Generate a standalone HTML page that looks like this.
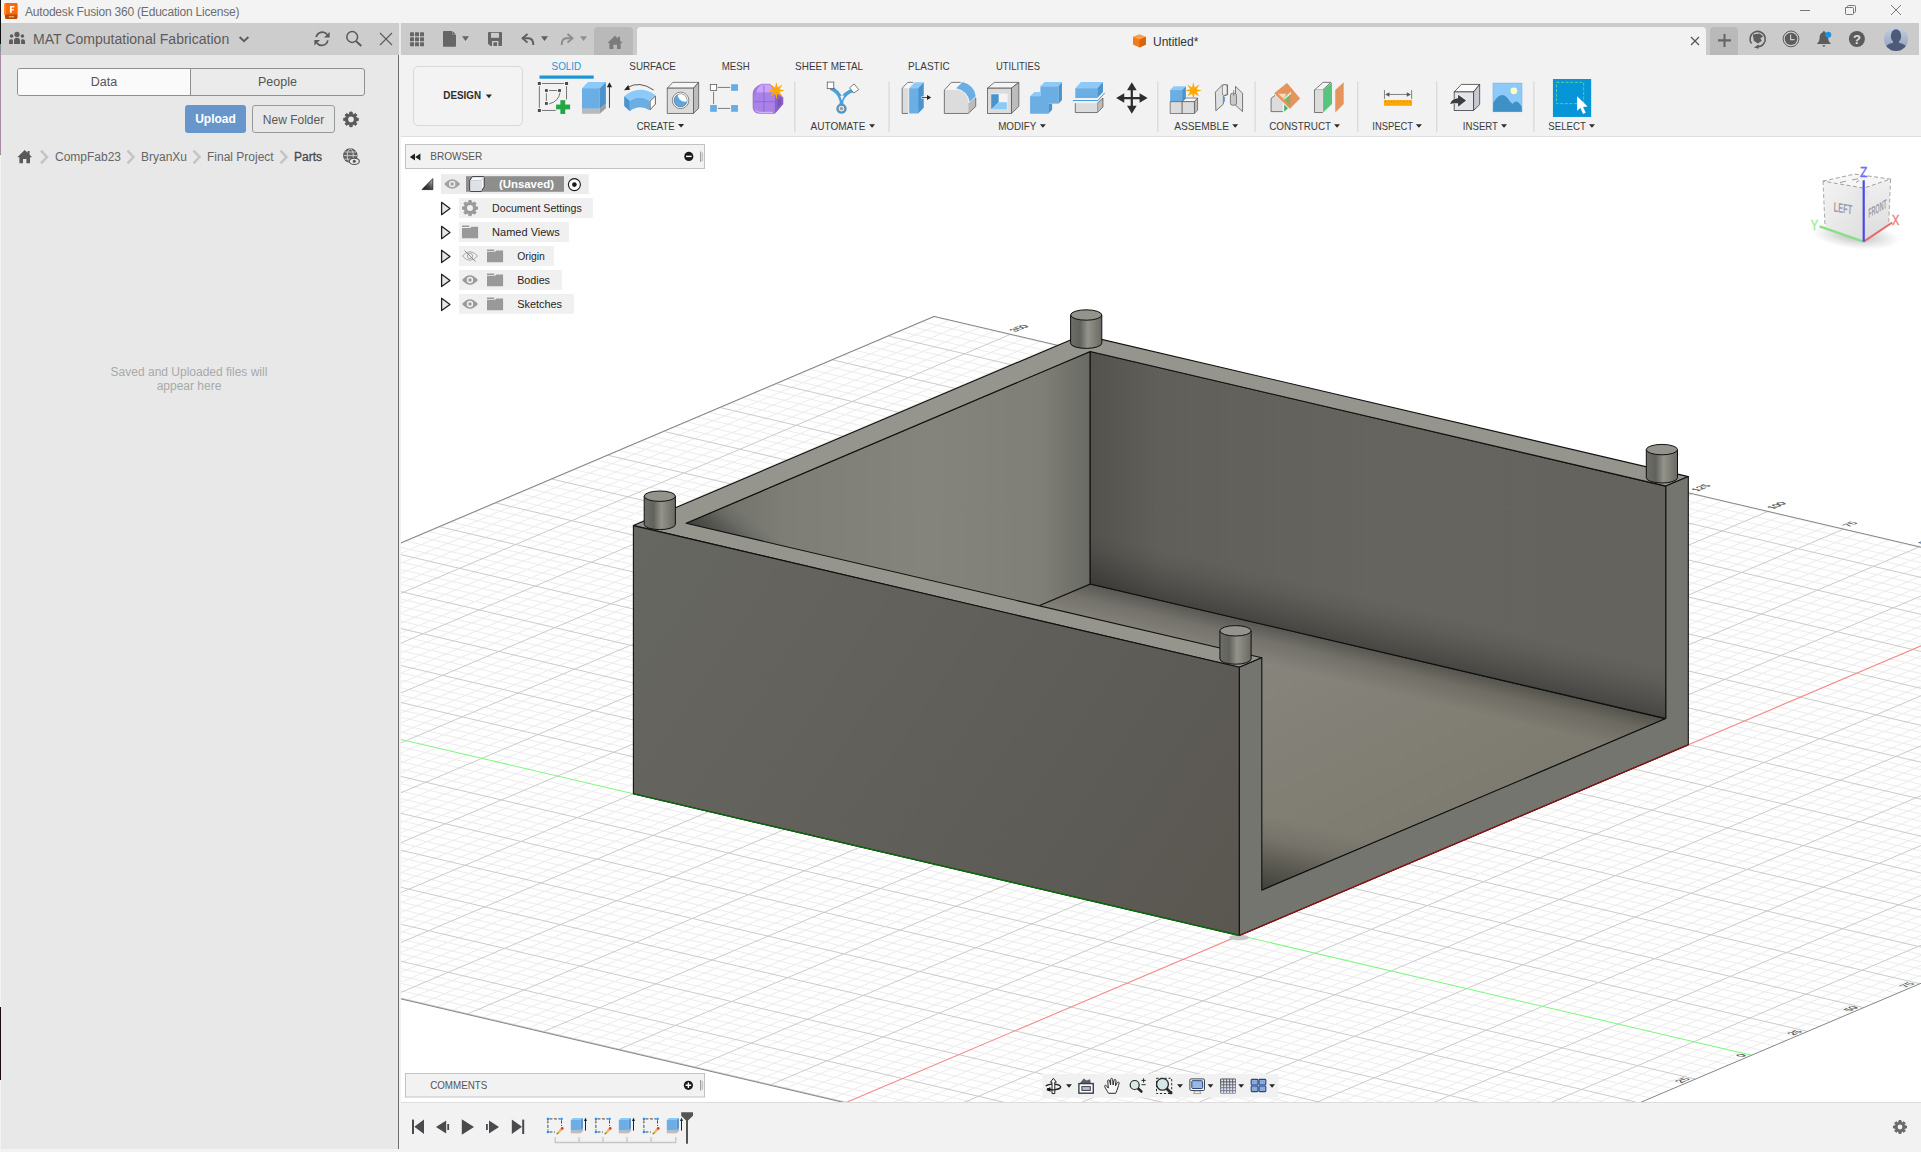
<!DOCTYPE html>
<html><head><meta charset="utf-8"><title>Autodesk Fusion 360</title>
<style>
*{box-sizing:border-box;margin:0;padding:0}
html,body{width:1921px;height:1152px;overflow:hidden;background:#f2f2f2;font-family:"Liberation Sans",sans-serif;}
.abs{position:absolute}
#titlebar{position:absolute;left:0;top:0;width:1921px;height:23px;background:#f3f3f3}
#titlebar .t{position:absolute;left:25px;top:5px;font-size:12px;color:#6e6e6e;white-space:nowrap;letter-spacing:-0.2px}
#lphead{position:absolute;left:1px;top:23px;width:397.7px;height:32px;background:#cdcdcd}
#lphead .t{position:absolute;left:32px;top:8px;font-size:14.05px;color:#5c5c5c;white-space:nowrap}
#lp{position:absolute;left:1px;top:55px;width:397px;height:1094px;background:#e8e8e8}
#lpedge{position:absolute;left:398px;top:55px;width:1px;height:1094px;background:#6c6c6c}
#gap{position:absolute;left:399px;top:23px;width:2px;height:32px;background:#ebebeb}
#gap2{position:absolute;left:399px;top:55px;width:2px;height:1097px;background:#f3f3f3}
#tabs{position:absolute;left:17px;top:68px;width:348px;height:28px;border:1px solid #8f8f8f;border-radius:3px;background:#ebebeb;overflow:hidden}
#tabs .d{position:absolute;left:0;top:0;width:173px;height:26px;background:#fafafa;border-right:1px solid #8f8f8f;text-align:center;font-size:12.5px;line-height:27px;color:#555}
#tabs .p{position:absolute;left:173px;top:0;width:173px;height:26px;text-align:center;font-size:12.5px;line-height:27px;color:#555}
#upload{position:absolute;left:185px;top:105px;width:61px;height:28px;background:#6796cb;border-radius:3px;color:#fff;font-weight:bold;font-size:12px;text-align:center;line-height:29px}
#newf{position:absolute;left:252px;top:105px;width:83px;height:28px;border:1px solid #9a9a9a;border-radius:3px;color:#595959;font-size:12px;text-align:center;line-height:28px}
.bc{position:absolute;top:150px;font-size:12px;color:#666;white-space:nowrap;line-height:14px}
#empty{position:absolute;left:0;top:365px;width:378px;text-align:center;font-size:12px;line-height:14px;color:#a9a9a9}
#tb{position:absolute;left:401px;top:23px;width:1518px;height:32px;background:#cbcbcb}
#hometab{position:absolute;left:594px;top:27px;width:39px;height:28px;background:#b9b9b9;border-radius:4px 4px 0 0}
#doctab{position:absolute;left:637px;top:27px;width:1069px;height:28px;background:#f2f2f2;border-radius:4px 4px 0 0}
#plustab{position:absolute;left:1710px;top:27px;width:28px;height:28px;background:#b9b9b9;border-radius:4px 4px 0 0}
#doctitle{position:absolute;left:1153px;top:35px;font-size:12px;color:#333;white-space:nowrap}
#ribbon{position:absolute;left:401px;top:55px;width:1520px;height:81px;background:#f2f2f2}
#ribline{position:absolute;left:401px;top:136px;width:1520px;height:1px;background:#dedede}
#design{position:absolute;left:413px;top:66px;width:110px;height:60px;border:1px solid #d8d8d8;border-radius:5px;background:#f3f3f3}
.cond{position:absolute;white-space:nowrap;font-size:11px;color:#3a3a3a;transform-origin:0 0;line-height:12px}
.sep{position:absolute;top:82px;width:1px;height:50px;background:#dadada}
#canvas{position:absolute;left:401px;top:137px;width:1520px;height:966px;background:#fff}
#bottom{position:absolute;left:401px;top:1103px;width:1520px;height:49px;background:#f2f2f2}
#botline{position:absolute;left:401px;top:1102px;width:1520px;height:1px;background:#dcdcdc}
.panelhdr{position:absolute;left:405px;width:299px;height:24px;border:1px solid #bdbdbd;background:#f2f2f2}
.panelhdr .t{position:absolute;left:24px;top:5px;font-size:11px;color:#4a4a4a;transform:scaleX(.9);transform-origin:0 0;white-space:nowrap}
.row{position:absolute;height:20px;background:#f0f0f0}
.row .t{position:absolute;top:4px;font-size:11px;color:#222;white-space:nowrap;line-height:12px}
svg{overflow:visible}

</style></head>
<body>
<div id="titlebar"><div class="t">Autodesk Fusion 360 (Education License)</div></div>
<div id="lphead"><div class="t">MAT Computational Fabrication</div></div>
<div id="lp"></div>
<div id="gap"></div><div id="gap2"></div>
<div id="lpedge"></div>
<div id="tabs"><div class="d">Data</div><div class="p">People</div></div>
<div id="upload">Upload</div>
<div id="newf">New Folder</div>
<div class="bc" style="left:55px">CompFab23</div>
<div class="bc" style="left:141px">BryanXu</div>
<div class="bc" style="left:207px">Final Project</div>
<div class="bc" style="left:294px;color:#4a4a4a;-webkit-text-stroke:0.3px #4a4a4a">Parts</div>
<div id="empty">Saved and Uploaded files will<br>appear here</div>
<div id="tb"></div>
<div id="hometab"></div>
<div id="doctab"></div>
<div id="plustab"></div>
<div id="doctitle">Untitled*</div>
<div id="ribbon"></div>
<div id="ribline"></div>
<div id="design"></div>
<div id="canvas"></div>
<svg width="1921" height="1152" viewBox="0 0 1921 1152" style="position:absolute;left:0;top:0">
<defs>
<clipPath id="vp"><rect x="401" y="137" width="1520" height="965.5"/></clipPath>
<linearGradient id="gFront" gradientUnits="userSpaceOnUse" x1="633" y1="526" x2="1239" y2="935"><stop offset="0" stop-color="#676762"/><stop offset="1" stop-color="#5a5751"/></linearGradient>
<linearGradient id="gWallL" gradientUnits="userSpaceOnUse" x1="686" y1="0" x2="1090" y2="0"><stop offset="0" stop-color="#6c6c66"/><stop offset="0.25" stop-color="#7e7e77"/><stop offset="0.6" stop-color="#84847c"/><stop offset="0.88" stop-color="#7f7f77"/><stop offset="1" stop-color="#6a6a64"/></linearGradient>
<linearGradient id="gWallR" gradientUnits="userSpaceOnUse" x1="1090" y1="0" x2="1666" y2="0"><stop offset="0" stop-color="#53524d"/><stop offset="0.12" stop-color="#605f5a"/><stop offset="0.5" stop-color="#65645e"/><stop offset="1" stop-color="#64635e"/></linearGradient>
<linearGradient id="gFloor" gradientUnits="userSpaceOnUse" x1="1290" y1="640" x2="1420" y2="900"><stop offset="0" stop-color="#86847c"/><stop offset=".5" stop-color="#817f74"/><stop offset="1" stop-color="#7b796e"/></linearGradient>
<linearGradient id="gCyl" x1="0" y1="0" x2="1" y2="0"><stop offset="0" stop-color="#6e6e68"/><stop offset="0.3" stop-color="#62625c"/><stop offset="0.55" stop-color="#93938b"/><stop offset="0.8" stop-color="#7c7c74"/><stop offset="1" stop-color="#6a6a63"/></linearGradient>
<linearGradient id="aoTip" gradientUnits="userSpaceOnUse" x1="686" y1="523" x2="710.9" y2="489.2"><stop offset="0" stop-color="#000" stop-opacity=".42"/><stop offset=".35" stop-color="#000" stop-opacity=".26"/><stop offset=".7" stop-color="#000" stop-opacity=".08"/><stop offset="1" stop-color="#000" stop-opacity="0"/></linearGradient>
<linearGradient id="aoWallRB" gradientUnits="userSpaceOnUse" x1="1400" y1="656.5" x2="1411.4" y2="607.8"><stop offset="0" stop-color="#000" stop-opacity=".3"/><stop offset=".35" stop-color="#000" stop-opacity=".17"/><stop offset=".7" stop-color="#000" stop-opacity=".06"/><stop offset="1" stop-color="#000" stop-opacity="0"/></linearGradient>
<linearGradient id="aoFloorR" gradientUnits="userSpaceOnUse" x1="1400" y1="656.5" x2="1391.3" y2="693.5"><stop offset="0" stop-color="#000" stop-opacity=".34"/><stop offset=".4" stop-color="#000" stop-opacity=".14"/><stop offset="1" stop-color="#000" stop-opacity="0"/></linearGradient>
<linearGradient id="aoFloorF" gradientUnits="userSpaceOnUse" x1="1261.4" y1="890.6" x2="1278.5" y2="817.6"><stop offset="0" stop-color="#000" stop-opacity=".5"/><stop offset=".35" stop-color="#000" stop-opacity=".3"/><stop offset=".7" stop-color="#000" stop-opacity=".08"/><stop offset="1" stop-color="#000" stop-opacity="0"/></linearGradient>
<linearGradient id="aoWallLB" gradientUnits="userSpaceOnUse" x1="1000" y1="624" x2="1000" y2="594"><stop offset="0" stop-color="#000" stop-opacity=".16"/><stop offset="1" stop-color="#000" stop-opacity="0"/></linearGradient>
</defs>
<g clip-path="url(#vp)">
<rect x="401" y="137" width="1520" height="966" fill="#fff"/>
<line x1="1369.9" y1="1217.3" x2="-279.2" y2="831.7" stroke="#ececec" stroke-width="1" />
<line x1="1381.1" y1="1212.6" x2="-267.9" y2="827.0" stroke="#ececec" stroke-width="1" />
<line x1="1392.3" y1="1207.8" x2="-256.7" y2="822.2" stroke="#ececec" stroke-width="1" />
<line x1="1403.6" y1="1203.0" x2="-245.5" y2="817.4" stroke="#ececec" stroke-width="1" />
<line x1="1426.0" y1="1193.5" x2="-223.1" y2="807.9" stroke="#ececec" stroke-width="1" />
<line x1="1437.2" y1="1188.7" x2="-211.8" y2="803.1" stroke="#ececec" stroke-width="1" />
<line x1="1448.5" y1="1184.0" x2="-200.6" y2="798.4" stroke="#ececec" stroke-width="1" />
<line x1="1459.7" y1="1179.2" x2="-189.4" y2="793.6" stroke="#ececec" stroke-width="1" />
<line x1="1482.1" y1="1169.7" x2="-166.9" y2="784.1" stroke="#ececec" stroke-width="1" />
<line x1="1493.4" y1="1164.9" x2="-155.7" y2="779.3" stroke="#ececec" stroke-width="1" />
<line x1="1504.6" y1="1160.1" x2="-144.5" y2="774.5" stroke="#ececec" stroke-width="1" />
<line x1="1515.8" y1="1155.4" x2="-133.3" y2="769.8" stroke="#ececec" stroke-width="1" />
<line x1="1538.2" y1="1145.8" x2="-110.8" y2="760.2" stroke="#ececec" stroke-width="1" />
<line x1="1549.5" y1="1141.1" x2="-99.6" y2="755.5" stroke="#ececec" stroke-width="1" />
<line x1="1560.7" y1="1136.3" x2="-88.4" y2="750.7" stroke="#ececec" stroke-width="1" />
<line x1="1571.9" y1="1131.5" x2="-77.2" y2="745.9" stroke="#ececec" stroke-width="1" />
<line x1="1594.4" y1="1122.0" x2="-54.7" y2="736.4" stroke="#ececec" stroke-width="1" />
<line x1="1605.6" y1="1117.2" x2="-43.5" y2="731.6" stroke="#ececec" stroke-width="1" />
<line x1="1616.8" y1="1112.4" x2="-32.3" y2="726.8" stroke="#ececec" stroke-width="1" />
<line x1="1628.0" y1="1107.7" x2="-21.1" y2="722.1" stroke="#ececec" stroke-width="1" />
<line x1="1650.5" y1="1098.1" x2="1.4" y2="712.5" stroke="#ececec" stroke-width="1" />
<line x1="1661.7" y1="1093.4" x2="12.6" y2="707.8" stroke="#ececec" stroke-width="1" />
<line x1="1672.9" y1="1088.6" x2="23.8" y2="703.0" stroke="#ececec" stroke-width="1" />
<line x1="1684.1" y1="1083.8" x2="35.1" y2="698.2" stroke="#ececec" stroke-width="1" />
<line x1="1706.6" y1="1074.3" x2="57.5" y2="688.7" stroke="#ececec" stroke-width="1" />
<line x1="1717.8" y1="1069.5" x2="68.7" y2="683.9" stroke="#ececec" stroke-width="1" />
<line x1="1729.0" y1="1064.8" x2="79.9" y2="679.2" stroke="#ececec" stroke-width="1" />
<line x1="1740.2" y1="1060.0" x2="91.2" y2="674.4" stroke="#ececec" stroke-width="1" />
<line x1="1762.7" y1="1050.5" x2="113.6" y2="664.9" stroke="#ececec" stroke-width="1" />
<line x1="1773.9" y1="1045.7" x2="124.8" y2="660.1" stroke="#ececec" stroke-width="1" />
<line x1="1785.1" y1="1040.9" x2="136.1" y2="655.3" stroke="#ececec" stroke-width="1" />
<line x1="1796.4" y1="1036.2" x2="147.3" y2="650.6" stroke="#ececec" stroke-width="1" />
<line x1="1818.8" y1="1026.6" x2="169.7" y2="641.0" stroke="#ececec" stroke-width="1" />
<line x1="1830.0" y1="1021.9" x2="181.0" y2="636.3" stroke="#ececec" stroke-width="1" />
<line x1="1841.2" y1="1017.1" x2="192.2" y2="631.5" stroke="#ececec" stroke-width="1" />
<line x1="1852.5" y1="1012.3" x2="203.4" y2="626.7" stroke="#ececec" stroke-width="1" />
<line x1="1874.9" y1="1002.8" x2="225.8" y2="617.2" stroke="#ececec" stroke-width="1" />
<line x1="1886.1" y1="998.0" x2="237.1" y2="612.4" stroke="#ececec" stroke-width="1" />
<line x1="1897.4" y1="993.3" x2="248.3" y2="607.7" stroke="#ececec" stroke-width="1" />
<line x1="1908.6" y1="988.5" x2="259.5" y2="602.9" stroke="#ececec" stroke-width="1" />
<line x1="1931.0" y1="979.0" x2="282.0" y2="593.4" stroke="#ececec" stroke-width="1" />
<line x1="1942.3" y1="974.2" x2="293.2" y2="588.6" stroke="#ececec" stroke-width="1" />
<line x1="1953.5" y1="969.4" x2="304.4" y2="583.8" stroke="#ececec" stroke-width="1" />
<line x1="1964.7" y1="964.7" x2="315.6" y2="579.1" stroke="#ececec" stroke-width="1" />
<line x1="1987.1" y1="955.1" x2="338.1" y2="569.5" stroke="#ececec" stroke-width="1" />
<line x1="1998.4" y1="950.4" x2="349.3" y2="564.8" stroke="#ececec" stroke-width="1" />
<line x1="2009.6" y1="945.6" x2="360.5" y2="560.0" stroke="#ececec" stroke-width="1" />
<line x1="2020.8" y1="940.8" x2="371.7" y2="555.2" stroke="#ececec" stroke-width="1" />
<line x1="2043.3" y1="931.3" x2="394.2" y2="545.7" stroke="#ececec" stroke-width="1" />
<line x1="2054.5" y1="926.5" x2="405.4" y2="540.9" stroke="#ececec" stroke-width="1" />
<line x1="2065.7" y1="921.7" x2="416.6" y2="536.1" stroke="#ececec" stroke-width="1" />
<line x1="2076.9" y1="917.0" x2="427.8" y2="531.4" stroke="#ececec" stroke-width="1" />
<line x1="2099.4" y1="907.4" x2="450.3" y2="521.8" stroke="#ececec" stroke-width="1" />
<line x1="2110.6" y1="902.7" x2="461.5" y2="517.1" stroke="#ececec" stroke-width="1" />
<line x1="2121.8" y1="897.9" x2="472.7" y2="512.3" stroke="#ececec" stroke-width="1" />
<line x1="2133.0" y1="893.1" x2="484.0" y2="507.5" stroke="#ececec" stroke-width="1" />
<line x1="2155.5" y1="883.6" x2="506.4" y2="498.0" stroke="#ececec" stroke-width="1" />
<line x1="2166.7" y1="878.8" x2="517.6" y2="493.2" stroke="#ececec" stroke-width="1" />
<line x1="2177.9" y1="874.1" x2="528.8" y2="488.5" stroke="#ececec" stroke-width="1" />
<line x1="2189.1" y1="869.3" x2="540.1" y2="483.7" stroke="#ececec" stroke-width="1" />
<line x1="2211.6" y1="859.8" x2="562.5" y2="474.2" stroke="#ececec" stroke-width="1" />
<line x1="2222.8" y1="855.0" x2="573.7" y2="469.4" stroke="#ececec" stroke-width="1" />
<line x1="2234.0" y1="850.2" x2="585.0" y2="464.6" stroke="#ececec" stroke-width="1" />
<line x1="2245.3" y1="845.5" x2="596.2" y2="459.9" stroke="#ececec" stroke-width="1" />
<line x1="2267.7" y1="835.9" x2="618.6" y2="450.3" stroke="#ececec" stroke-width="1" />
<line x1="2278.9" y1="831.2" x2="629.9" y2="445.6" stroke="#ececec" stroke-width="1" />
<line x1="2290.1" y1="826.4" x2="641.1" y2="440.8" stroke="#ececec" stroke-width="1" />
<line x1="2301.4" y1="821.6" x2="652.3" y2="436.0" stroke="#ececec" stroke-width="1" />
<line x1="2323.8" y1="812.1" x2="674.7" y2="426.5" stroke="#ececec" stroke-width="1" />
<line x1="2335.0" y1="807.3" x2="686.0" y2="421.7" stroke="#ececec" stroke-width="1" />
<line x1="2346.3" y1="802.6" x2="697.2" y2="417.0" stroke="#ececec" stroke-width="1" />
<line x1="2357.5" y1="797.8" x2="708.4" y2="412.2" stroke="#ececec" stroke-width="1" />
<line x1="2379.9" y1="788.3" x2="730.9" y2="402.7" stroke="#ececec" stroke-width="1" />
<line x1="2391.2" y1="783.5" x2="742.1" y2="397.9" stroke="#ececec" stroke-width="1" />
<line x1="2402.4" y1="778.7" x2="753.3" y2="393.1" stroke="#ececec" stroke-width="1" />
<line x1="2413.6" y1="774.0" x2="764.5" y2="388.4" stroke="#ececec" stroke-width="1" />
<line x1="2436.0" y1="764.4" x2="787.0" y2="378.8" stroke="#ececec" stroke-width="1" />
<line x1="2447.3" y1="759.7" x2="798.2" y2="374.1" stroke="#ececec" stroke-width="1" />
<line x1="2458.5" y1="754.9" x2="809.4" y2="369.3" stroke="#ececec" stroke-width="1" />
<line x1="2469.7" y1="750.1" x2="820.6" y2="364.5" stroke="#ececec" stroke-width="1" />
<line x1="2492.2" y1="740.6" x2="843.1" y2="355.0" stroke="#ececec" stroke-width="1" />
<line x1="2503.4" y1="735.8" x2="854.3" y2="350.2" stroke="#ececec" stroke-width="1" />
<line x1="2514.6" y1="731.0" x2="865.5" y2="345.4" stroke="#ececec" stroke-width="1" />
<line x1="2525.8" y1="726.3" x2="876.7" y2="340.7" stroke="#ececec" stroke-width="1" />
<line x1="2548.3" y1="716.7" x2="899.2" y2="331.1" stroke="#ececec" stroke-width="1" />
<line x1="2559.5" y1="712.0" x2="910.4" y2="326.4" stroke="#ececec" stroke-width="1" />
<line x1="2570.7" y1="707.2" x2="921.6" y2="321.6" stroke="#ececec" stroke-width="1" />
<line x1="2581.9" y1="702.4" x2="932.9" y2="316.8" stroke="#ececec" stroke-width="1" />
<line x1="1345.4" y1="1219.7" x2="2570.9" y2="699.1" stroke="#ececec" stroke-width="1" />
<line x1="1330.3" y1="1216.2" x2="2555.8" y2="695.6" stroke="#ececec" stroke-width="1" />
<line x1="1315.1" y1="1212.7" x2="2540.6" y2="692.0" stroke="#ececec" stroke-width="1" />
<line x1="1284.8" y1="1205.6" x2="2510.3" y2="685.0" stroke="#ececec" stroke-width="1" />
<line x1="1269.7" y1="1202.0" x2="2495.2" y2="681.4" stroke="#ececec" stroke-width="1" />
<line x1="1254.5" y1="1198.5" x2="2480.0" y2="677.9" stroke="#ececec" stroke-width="1" />
<line x1="1239.4" y1="1194.9" x2="2464.9" y2="674.3" stroke="#ececec" stroke-width="1" />
<line x1="1209.1" y1="1187.9" x2="2434.6" y2="667.2" stroke="#ececec" stroke-width="1" />
<line x1="1193.9" y1="1184.3" x2="2419.4" y2="663.7" stroke="#ececec" stroke-width="1" />
<line x1="1178.8" y1="1180.8" x2="2404.3" y2="660.2" stroke="#ececec" stroke-width="1" />
<line x1="1163.6" y1="1177.2" x2="2389.1" y2="656.6" stroke="#ececec" stroke-width="1" />
<line x1="1133.3" y1="1170.1" x2="2358.8" y2="649.5" stroke="#ececec" stroke-width="1" />
<line x1="1118.2" y1="1166.6" x2="2343.7" y2="646.0" stroke="#ececec" stroke-width="1" />
<line x1="1103.0" y1="1163.1" x2="2328.5" y2="642.5" stroke="#ececec" stroke-width="1" />
<line x1="1087.9" y1="1159.5" x2="2313.4" y2="638.9" stroke="#ececec" stroke-width="1" />
<line x1="1057.6" y1="1152.4" x2="2283.1" y2="631.8" stroke="#ececec" stroke-width="1" />
<line x1="1042.4" y1="1148.9" x2="2267.9" y2="628.3" stroke="#ececec" stroke-width="1" />
<line x1="1027.3" y1="1145.3" x2="2252.8" y2="624.7" stroke="#ececec" stroke-width="1" />
<line x1="1012.1" y1="1141.8" x2="2237.6" y2="621.2" stroke="#ececec" stroke-width="1" />
<line x1="981.8" y1="1134.7" x2="2207.3" y2="614.1" stroke="#ececec" stroke-width="1" />
<line x1="966.7" y1="1131.2" x2="2192.2" y2="610.6" stroke="#ececec" stroke-width="1" />
<line x1="951.5" y1="1127.6" x2="2177.0" y2="607.0" stroke="#ececec" stroke-width="1" />
<line x1="936.4" y1="1124.1" x2="2161.9" y2="603.5" stroke="#ececec" stroke-width="1" />
<line x1="906.1" y1="1117.0" x2="2131.6" y2="596.4" stroke="#ececec" stroke-width="1" />
<line x1="890.9" y1="1113.5" x2="2116.4" y2="592.9" stroke="#ececec" stroke-width="1" />
<line x1="875.8" y1="1109.9" x2="2101.3" y2="589.3" stroke="#ececec" stroke-width="1" />
<line x1="860.6" y1="1106.4" x2="2086.1" y2="585.8" stroke="#ececec" stroke-width="1" />
<line x1="830.3" y1="1099.3" x2="2055.8" y2="578.7" stroke="#ececec" stroke-width="1" />
<line x1="815.2" y1="1095.8" x2="2040.7" y2="575.1" stroke="#ececec" stroke-width="1" />
<line x1="800.0" y1="1092.2" x2="2025.5" y2="571.6" stroke="#ececec" stroke-width="1" />
<line x1="784.9" y1="1088.7" x2="2010.4" y2="568.1" stroke="#ececec" stroke-width="1" />
<line x1="754.6" y1="1081.6" x2="1980.1" y2="561.0" stroke="#ececec" stroke-width="1" />
<line x1="739.4" y1="1078.0" x2="1964.9" y2="557.4" stroke="#ececec" stroke-width="1" />
<line x1="724.3" y1="1074.5" x2="1949.8" y2="553.9" stroke="#ececec" stroke-width="1" />
<line x1="709.1" y1="1071.0" x2="1934.6" y2="550.3" stroke="#ececec" stroke-width="1" />
<line x1="678.8" y1="1063.9" x2="1904.3" y2="543.3" stroke="#ececec" stroke-width="1" />
<line x1="663.7" y1="1060.3" x2="1889.2" y2="539.7" stroke="#ececec" stroke-width="1" />
<line x1="648.5" y1="1056.8" x2="1874.0" y2="536.2" stroke="#ececec" stroke-width="1" />
<line x1="633.4" y1="1053.2" x2="1858.9" y2="532.6" stroke="#ececec" stroke-width="1" />
<line x1="603.1" y1="1046.2" x2="1828.6" y2="525.5" stroke="#ececec" stroke-width="1" />
<line x1="587.9" y1="1042.6" x2="1813.4" y2="522.0" stroke="#ececec" stroke-width="1" />
<line x1="572.8" y1="1039.1" x2="1798.3" y2="518.5" stroke="#ececec" stroke-width="1" />
<line x1="557.6" y1="1035.5" x2="1783.1" y2="514.9" stroke="#ececec" stroke-width="1" />
<line x1="527.3" y1="1028.4" x2="1752.8" y2="507.8" stroke="#ececec" stroke-width="1" />
<line x1="512.2" y1="1024.9" x2="1737.7" y2="504.3" stroke="#ececec" stroke-width="1" />
<line x1="497.0" y1="1021.4" x2="1722.5" y2="500.8" stroke="#ececec" stroke-width="1" />
<line x1="481.9" y1="1017.8" x2="1707.4" y2="497.2" stroke="#ececec" stroke-width="1" />
<line x1="451.6" y1="1010.7" x2="1677.1" y2="490.1" stroke="#ececec" stroke-width="1" />
<line x1="436.4" y1="1007.2" x2="1661.9" y2="486.6" stroke="#ececec" stroke-width="1" />
<line x1="421.3" y1="1003.6" x2="1646.8" y2="483.0" stroke="#ececec" stroke-width="1" />
<line x1="406.1" y1="1000.1" x2="1631.6" y2="479.5" stroke="#ececec" stroke-width="1" />
<line x1="375.8" y1="993.0" x2="1601.3" y2="472.4" stroke="#ececec" stroke-width="1" />
<line x1="360.7" y1="989.5" x2="1586.2" y2="468.9" stroke="#ececec" stroke-width="1" />
<line x1="345.5" y1="985.9" x2="1571.0" y2="465.3" stroke="#ececec" stroke-width="1" />
<line x1="330.4" y1="982.4" x2="1555.9" y2="461.8" stroke="#ececec" stroke-width="1" />
<line x1="300.1" y1="975.3" x2="1525.6" y2="454.7" stroke="#ececec" stroke-width="1" />
<line x1="284.9" y1="971.8" x2="1510.4" y2="451.2" stroke="#ececec" stroke-width="1" />
<line x1="269.8" y1="968.2" x2="1495.3" y2="447.6" stroke="#ececec" stroke-width="1" />
<line x1="254.6" y1="964.7" x2="1480.1" y2="444.1" stroke="#ececec" stroke-width="1" />
<line x1="224.3" y1="957.6" x2="1449.8" y2="437.0" stroke="#ececec" stroke-width="1" />
<line x1="209.2" y1="954.1" x2="1434.7" y2="433.4" stroke="#ececec" stroke-width="1" />
<line x1="194.0" y1="950.5" x2="1419.5" y2="429.9" stroke="#ececec" stroke-width="1" />
<line x1="178.9" y1="947.0" x2="1404.4" y2="426.4" stroke="#ececec" stroke-width="1" />
<line x1="148.6" y1="939.9" x2="1374.1" y2="419.3" stroke="#ececec" stroke-width="1" />
<line x1="133.4" y1="936.3" x2="1358.9" y2="415.7" stroke="#ececec" stroke-width="1" />
<line x1="118.3" y1="932.8" x2="1343.8" y2="412.2" stroke="#ececec" stroke-width="1" />
<line x1="103.1" y1="929.3" x2="1328.6" y2="408.6" stroke="#ececec" stroke-width="1" />
<line x1="72.8" y1="922.2" x2="1298.3" y2="401.6" stroke="#ececec" stroke-width="1" />
<line x1="57.7" y1="918.6" x2="1283.2" y2="398.0" stroke="#ececec" stroke-width="1" />
<line x1="42.5" y1="915.1" x2="1268.0" y2="394.5" stroke="#ececec" stroke-width="1" />
<line x1="27.4" y1="911.5" x2="1252.9" y2="390.9" stroke="#ececec" stroke-width="1" />
<line x1="-2.9" y1="904.5" x2="1222.6" y2="383.8" stroke="#ececec" stroke-width="1" />
<line x1="-18.1" y1="900.9" x2="1207.4" y2="380.3" stroke="#ececec" stroke-width="1" />
<line x1="-33.2" y1="897.4" x2="1192.3" y2="376.8" stroke="#ececec" stroke-width="1" />
<line x1="-48.4" y1="893.8" x2="1177.1" y2="373.2" stroke="#ececec" stroke-width="1" />
<line x1="-78.7" y1="886.7" x2="1146.8" y2="366.1" stroke="#ececec" stroke-width="1" />
<line x1="-93.8" y1="883.2" x2="1131.7" y2="362.6" stroke="#ececec" stroke-width="1" />
<line x1="-109.0" y1="879.7" x2="1116.5" y2="359.1" stroke="#ececec" stroke-width="1" />
<line x1="-124.1" y1="876.1" x2="1101.4" y2="355.5" stroke="#ececec" stroke-width="1" />
<line x1="-154.4" y1="869.0" x2="1071.1" y2="348.4" stroke="#ececec" stroke-width="1" />
<line x1="-169.6" y1="865.5" x2="1055.9" y2="344.9" stroke="#ececec" stroke-width="1" />
<line x1="-184.7" y1="861.9" x2="1040.8" y2="341.3" stroke="#ececec" stroke-width="1" />
<line x1="-199.9" y1="858.4" x2="1025.6" y2="337.8" stroke="#ececec" stroke-width="1" />
<line x1="-230.2" y1="851.3" x2="995.3" y2="330.7" stroke="#ececec" stroke-width="1" />
<line x1="-245.3" y1="847.8" x2="980.2" y2="327.2" stroke="#ececec" stroke-width="1" />
<line x1="-260.5" y1="844.2" x2="965.0" y2="323.6" stroke="#ececec" stroke-width="1" />
<line x1="-275.6" y1="840.7" x2="949.9" y2="320.1" stroke="#ececec" stroke-width="1" />
<line x1="1358.7" y1="1222.1" x2="-290.4" y2="836.5" stroke="#cbcbcb" stroke-width="1" />
<line x1="1414.8" y1="1198.3" x2="-234.3" y2="812.7" stroke="#cbcbcb" stroke-width="1" />
<line x1="1470.9" y1="1174.4" x2="-178.2" y2="788.8" stroke="#cbcbcb" stroke-width="1" />
<line x1="1527.0" y1="1150.6" x2="-122.1" y2="765.0" stroke="#cbcbcb" stroke-width="1" />
<line x1="1583.1" y1="1126.7" x2="-65.9" y2="741.1" stroke="#cbcbcb" stroke-width="1" />
<line x1="1639.2" y1="1102.9" x2="-9.8" y2="717.3" stroke="#cbcbcb" stroke-width="1" />
<line x1="1695.4" y1="1079.1" x2="46.3" y2="693.5" stroke="#cbcbcb" stroke-width="1" />
<line x1="1807.6" y1="1031.4" x2="158.5" y2="645.8" stroke="#cbcbcb" stroke-width="1" />
<line x1="1863.7" y1="1007.6" x2="214.6" y2="622.0" stroke="#cbcbcb" stroke-width="1" />
<line x1="1919.8" y1="983.7" x2="270.7" y2="598.1" stroke="#cbcbcb" stroke-width="1" />
<line x1="1975.9" y1="959.9" x2="326.8" y2="574.3" stroke="#cbcbcb" stroke-width="1" />
<line x1="2032.0" y1="936.0" x2="383.0" y2="550.4" stroke="#cbcbcb" stroke-width="1" />
<line x1="2088.1" y1="912.2" x2="439.1" y2="526.6" stroke="#cbcbcb" stroke-width="1" />
<line x1="2144.3" y1="888.4" x2="495.2" y2="502.8" stroke="#cbcbcb" stroke-width="1" />
<line x1="2200.4" y1="864.5" x2="551.3" y2="478.9" stroke="#cbcbcb" stroke-width="1" />
<line x1="2256.5" y1="840.7" x2="607.4" y2="455.1" stroke="#cbcbcb" stroke-width="1" />
<line x1="2312.6" y1="816.9" x2="663.5" y2="431.3" stroke="#cbcbcb" stroke-width="1" />
<line x1="2368.7" y1="793.0" x2="719.6" y2="407.4" stroke="#cbcbcb" stroke-width="1" />
<line x1="2424.8" y1="769.2" x2="775.7" y2="383.6" stroke="#cbcbcb" stroke-width="1" />
<line x1="2480.9" y1="745.3" x2="831.9" y2="359.7" stroke="#cbcbcb" stroke-width="1" />
<line x1="2537.0" y1="721.5" x2="888.0" y2="335.9" stroke="#cbcbcb" stroke-width="1" />
<line x1="1300.0" y1="1209.1" x2="2525.5" y2="688.5" stroke="#cbcbcb" stroke-width="1" />
<line x1="1224.2" y1="1191.4" x2="2449.7" y2="670.8" stroke="#cbcbcb" stroke-width="1" />
<line x1="1148.5" y1="1173.7" x2="2374.0" y2="653.1" stroke="#cbcbcb" stroke-width="1" />
<line x1="1072.7" y1="1156.0" x2="2298.2" y2="635.4" stroke="#cbcbcb" stroke-width="1" />
<line x1="997.0" y1="1138.3" x2="2222.5" y2="617.7" stroke="#cbcbcb" stroke-width="1" />
<line x1="921.2" y1="1120.6" x2="2146.7" y2="599.9" stroke="#cbcbcb" stroke-width="1" />
<line x1="769.7" y1="1085.1" x2="1995.2" y2="564.5" stroke="#cbcbcb" stroke-width="1" />
<line x1="694.0" y1="1067.4" x2="1919.5" y2="546.8" stroke="#cbcbcb" stroke-width="1" />
<line x1="618.2" y1="1049.7" x2="1843.7" y2="529.1" stroke="#cbcbcb" stroke-width="1" />
<line x1="542.5" y1="1032.0" x2="1768.0" y2="511.4" stroke="#cbcbcb" stroke-width="1" />
<line x1="466.7" y1="1014.3" x2="1692.2" y2="493.7" stroke="#cbcbcb" stroke-width="1" />
<line x1="391.0" y1="996.6" x2="1616.5" y2="476.0" stroke="#cbcbcb" stroke-width="1" />
<line x1="315.2" y1="978.9" x2="1540.7" y2="458.2" stroke="#cbcbcb" stroke-width="1" />
<line x1="239.5" y1="961.1" x2="1465.0" y2="440.5" stroke="#cbcbcb" stroke-width="1" />
<line x1="163.7" y1="943.4" x2="1389.2" y2="422.8" stroke="#cbcbcb" stroke-width="1" />
<line x1="88.0" y1="925.7" x2="1313.5" y2="405.1" stroke="#cbcbcb" stroke-width="1" />
<line x1="12.2" y1="908.0" x2="1237.7" y2="387.4" stroke="#cbcbcb" stroke-width="1" />
<line x1="-63.5" y1="890.3" x2="1162.0" y2="369.7" stroke="#cbcbcb" stroke-width="1" />
<line x1="-139.3" y1="872.6" x2="1086.2" y2="352.0" stroke="#cbcbcb" stroke-width="1" />
<line x1="-215.0" y1="854.9" x2="1010.5" y2="334.3" stroke="#cbcbcb" stroke-width="1" />
<line x1="-290.8" y1="837.2" x2="934.7" y2="316.5" stroke="#cbcbcb" stroke-width="1" />
<line x1="845.5" y1="1102.8" x2="2071.0" y2="582.2" stroke="#f68686" stroke-width="1.05" />
<line x1="1751.5" y1="1055.2" x2="102.4" y2="669.6" stroke="#80f680" stroke-width="1.05" />
<polygon points="1357.6,1222.6 2583.1,702.0 934.0,316.4 -291.5,837.0" fill="none" stroke="#858585" stroke-width="1"/>
<text transform="matrix(0.840,-0.357,1.022,0.239,1015.5,332.1)" font-family="Liberation Sans, sans-serif" font-size="10" fill="#333" stroke="#333" stroke-width=".25" text-anchor="start" opacity=".9">350</text>
<text transform="matrix(0.840,-0.357,1.022,0.239,1697.3,491.5)" font-family="Liberation Sans, sans-serif" font-size="10" fill="#333" stroke="#333" stroke-width=".25" text-anchor="start" opacity=".9">125</text>
<text transform="matrix(0.840,-0.357,1.022,0.239,1773.0,509.2)" font-family="Liberation Sans, sans-serif" font-size="10" fill="#333" stroke="#333" stroke-width=".25" text-anchor="start" opacity=".9">100</text>
<text transform="matrix(0.840,-0.357,1.022,0.239,1848.8,526.9)" font-family="Liberation Sans, sans-serif" font-size="10" fill="#333" stroke="#333" stroke-width=".25" text-anchor="start" opacity=".9">75</text>
<text transform="matrix(0.840,-0.357,1.022,0.239,1924.5,544.7)" font-family="Liberation Sans, sans-serif" font-size="10" fill="#333" stroke="#333" stroke-width=".25" text-anchor="start" opacity=".9">50</text>
<text transform="matrix(0.840,-0.357,1.022,0.239,1634.5,1102.9)" font-family="Liberation Sans, sans-serif" font-size="10" fill="#333" stroke="#333" stroke-width=".25" text-anchor="end" opacity=".9">50</text>
<text transform="matrix(0.840,-0.357,1.022,0.239,1690.6,1079.1)" font-family="Liberation Sans, sans-serif" font-size="10" fill="#333" stroke="#333" stroke-width=".25" text-anchor="end" opacity=".9">25</text>
<text transform="matrix(0.840,-0.357,1.022,0.239,1746.8,1055.2)" font-family="Liberation Sans, sans-serif" font-size="10" fill="#333" stroke="#333" stroke-width=".25" text-anchor="end" opacity=".9">0</text>
<text transform="matrix(0.840,-0.357,1.022,0.239,1802.9,1031.4)" font-family="Liberation Sans, sans-serif" font-size="10" fill="#333" stroke="#333" stroke-width=".25" text-anchor="end" opacity=".9">25</text>
<text transform="matrix(0.840,-0.357,1.022,0.239,1859.0,1007.6)" font-family="Liberation Sans, sans-serif" font-size="10" fill="#333" stroke="#333" stroke-width=".25" text-anchor="end" opacity=".9">50</text>
<text transform="matrix(0.840,-0.357,1.022,0.239,1915.1,983.7)" font-family="Liberation Sans, sans-serif" font-size="10" fill="#333" stroke="#333" stroke-width=".25" text-anchor="end" opacity=".9">75</text>
<ellipse cx="1239" cy="937.5" rx="10" ry="3" fill="#c8c8c8"/>
<polygon points="1261.8,890.2 1665.9,718.6 1090.2,584.0 686.1,755.6" fill="url(#gFloor)" stroke="#111" stroke-width="1.1" stroke-linejoin="round"/>
<polygon points="1261.8,890.2 1665.9,718.6 1090.2,584.0 686.1,755.6" fill="url(#aoFloorR)"/>
<polygon points="1261.8,890.2 1665.9,718.6 1090.2,584.0 686.1,755.6" fill="url(#aoFloorF)"/>
<polygon points="686.1,523.2 1090.2,351.5 1090.2,584.0 686.1,755.6" fill="url(#gWallL)" stroke="#111" stroke-width="1.1" stroke-linejoin="round"/>
<polygon points="686.1,523.2 1090.2,351.5 1090.2,584.0 686.1,755.6" fill="url(#aoTip)"/>
<polygon points="1090.2,351.5 1665.9,486.1 1665.9,718.6 1090.2,584.0" fill="url(#gWallR)" stroke="#111" stroke-width="1.1" stroke-linejoin="round"/>
<polygon points="1090.2,351.5 1665.9,486.1 1665.9,718.6 1090.2,584.0" fill="url(#aoWallRB)"/>
<polygon points="1239.4,667.3 633.4,525.6 1082.3,334.9 1688.3,476.6 1665.9,486.1 1090.2,351.5 686.1,523.2 1261.8,657.8" fill="#95958d" stroke="#111" stroke-width="1.1" stroke-linejoin="round"/>
<polygon points="1239.4,935.5 633.4,793.8 633.4,525.6 1239.4,667.3" fill="url(#gFront)" stroke="#111" stroke-width="1.1" stroke-linejoin="round"/>
<polygon points="1239.4,935.5 1688.3,744.8 1688.3,476.6 1665.9,486.1 1665.9,718.6 1261.8,890.2 1261.8,657.8 1239.4,667.3" fill="#75756f" stroke="#111" stroke-width="1.1" stroke-linejoin="round"/>
<line x1="1239.4" y1="935.5" x2="1688.3" y2="744.8" stroke="#8b1414" stroke-width="1.3" />
<line x1="1239.4" y1="935.5" x2="633.4" y2="793.8" stroke="#0b6b0b" stroke-width="1.3" />
<path d="M1219.9,630.8 L1219.9,659.0 A15.6,5.2 0 0 0 1251.1,659.0 L1251.1,630.8 Z" fill="url(#gCyl)" stroke="#111" stroke-width="1"/>
<ellipse cx="1235.5" cy="630.8" rx="15.6" ry="5.2" fill="#94948c" stroke="#111" stroke-width="1"/>
<path d="M644.2,496.2 L644.2,524.4 A15.6,5.2 0 0 0 675.4,524.4 L675.4,496.2 Z" fill="url(#gCyl)" stroke="#111" stroke-width="1"/>
<ellipse cx="659.8" cy="496.2" rx="15.6" ry="5.2" fill="#94948c" stroke="#111" stroke-width="1"/>
<path d="M1070.6,315.0 L1070.6,343.2 A15.6,5.2 0 0 0 1101.8,343.2 L1101.8,315.0 Z" fill="url(#gCyl)" stroke="#111" stroke-width="1"/>
<ellipse cx="1086.2" cy="315.0" rx="15.6" ry="5.2" fill="#94948c" stroke="#111" stroke-width="1"/>
<path d="M1646.3,449.6 L1646.3,477.8 A15.6,5.2 0 0 0 1677.5,477.8 L1677.5,449.6 Z" fill="url(#gCyl)" stroke="#111" stroke-width="1"/>
<ellipse cx="1661.9" cy="449.6" rx="15.6" ry="5.2" fill="#94948c" stroke="#111" stroke-width="1"/>
</g>
</svg>
<div id="botline"></div>
<div id="bottom"></div>
<svg width="1921" height="1152" viewBox="0 0 1921 1152" style="position:absolute;left:0;top:0"><rect x="0" y="0" width="1" height="44" fill="#101010"/><rect x="0" y="44" width="1" height="7" fill="#7a9a8c"/><rect x="0" y="51" width="1" height="103" fill="#a88aa4"/><rect x="0" y="154" width="1" height="1" fill="#6a9a6a"/><rect x="0" y="1007" width="1" height="73" fill="#1c0c0c"/><g><path d="M5.5,3 H16 a1.5,1.5 0 0 1 1.5,1.5 V17.5 a1.5,1.5 0 0 1 -1.5,1.5 H6.5 a1.5,1.5 0 0 1 -1.5,-1.5 V14.5 L4,14 V4.5 Z" fill="#b94a00"/><path d="M4,4.5 L6,3 H15.5 a1.5,1.5 0 0 1 1.5,1.5 V14.6 H4 Z" fill="#ff6b00"/><path d="M4,4.5 L6,3 V14.6 H4 Z" fill="#ff8a33"/><path d="M9.9,6 H14.3 V7.6 H11.7 V9 H13.9 V10.5 H11.7 V12.8 H9.9 Z" fill="#fff"/><rect x="8.8" y="15.9" width="5.4" height="1.6" fill="#e9b58f" opacity=".8"/></g><g fill="#5c5c5c"><circle cx="17" cy="34.4" r="2.6"/><path d="M14,44 V40.7 a3,3 0 0 1 6,0 V44 Z"/><circle cx="11.6" cy="36" r="1.8"/><path d="M9,44 V41.3 a2,2 0 0 1 2,-2 h0.6 a1.3,1.3 0 0 1 1.3,1.3 V44 Z"/><circle cx="22.4" cy="36" r="1.8"/><path d="M25,44 V41.3 a2,2 0 0 0 -2,-2 h-0.6 a1.3,1.3 0 0 0 -1.3,1.3 V44 Z"/></g><path d="M239.6,37 L244,41.2 L248.4,37" fill="none" stroke="#5c5c5c" stroke-width="1.9"/><g fill="none" stroke="#5a5a5a" stroke-width="1.7"><path d="M316.2,37.2 A6.2,6.2 0 0 1 327.2,34.6"/><path d="M327.8,40.4 A6.2,6.2 0 0 1 316.8,43"/></g><path d="M329.6,32 V37.6 H324 Z" fill="#5a5a5a"/><path d="M314.4,45.6 V40 H320 Z" fill="#5a5a5a"/><circle cx="352.2" cy="37" r="5.4" fill="none" stroke="#5a5a5a" stroke-width="1.5"/><path d="M356.2,41.2 L361.3,46" stroke="#5a5a5a" stroke-width="1.9"/><path d="M380,33 L392,45 M392,33 L380,45" stroke="#5a5a5a" stroke-width="1.1"/><path d="M358.31,118.24 L358.31,120.56 L356.47,120.71 L355.80,122.34 L356.99,123.75 L355.35,125.39 L353.94,124.20 L352.31,124.87 L352.16,126.71 L349.84,126.71 L349.69,124.87 L348.06,124.20 L346.65,125.39 L345.01,123.75 L346.20,122.34 L345.53,120.71 L343.69,120.56 L343.69,118.24 L345.53,118.09 L346.20,116.46 L345.01,115.05 L346.65,113.41 L348.06,114.60 L349.69,113.93 L349.84,112.09 L352.16,112.09 L352.31,113.93 L353.94,114.60 L355.35,113.41 L356.99,115.05 L355.80,116.46 L356.47,118.09Z" fill="#5a5a5a" stroke="#5a5a5a" stroke-width="1" stroke-linejoin="round"/><circle cx="351.0" cy="119.4" r="2.80" fill="#e9e9e9"/><path d="M17.3,157.2 L24.7,150 L27.6,152.8 V151 H29.6 V154.7 L32.1,157.2 H30 V163.2 H26.4 V159 H23 V163.2 H19.4 V157.2 Z" fill="#595959"/><path d="M41.0,150.6 L47.0,157 L41.0,163.4" fill="none" stroke="#c4c4c4" stroke-width="2.5"/><path d="M127.5,150.6 L133.5,157 L127.5,163.4" fill="none" stroke="#c4c4c4" stroke-width="2.5"/><path d="M193.5,150.6 L199.5,157 L193.5,163.4" fill="none" stroke="#c4c4c4" stroke-width="2.5"/><path d="M280.5,150.6 L286.5,157 L280.5,163.4" fill="none" stroke="#c4c4c4" stroke-width="2.5"/><g fill="none" stroke="#555" stroke-width="1.1"><circle cx="350.3" cy="155.6" r="6.7" fill="#666"/><ellipse cx="350.3" cy="155.6" rx="3" ry="6.7" stroke="#ddd" stroke-width=".8"/><path d="M343.6,155.6 H357 M344.6,152 H356 M344.6,159.2 H356" stroke="#ddd" stroke-width=".8"/></g><ellipse cx="354.3" cy="161.3" rx="5" ry="3.2" fill="#e9e9e9" stroke="#555" stroke-width="1.2"/><circle cx="354.3" cy="161.3" r="1.5" fill="#555"/><g fill="#666"><rect x="410.0" y="32.3" width="4" height="4" rx=".6"/><rect x="410.0" y="37.3" width="4" height="4" rx=".6"/><rect x="410.0" y="42.3" width="4" height="4" rx=".6"/><rect x="415.0" y="32.3" width="4" height="4" rx=".6"/><rect x="415.0" y="37.3" width="4" height="4" rx=".6"/><rect x="415.0" y="42.3" width="4" height="4" rx=".6"/><rect x="420.0" y="32.3" width="4" height="4" rx=".6"/><rect x="420.0" y="37.3" width="4" height="4" rx=".6"/><rect x="420.0" y="42.3" width="4" height="4" rx=".6"/></g><path d="M443.8,31 H452 L456,35 V46 a.8,.8 0 0 1 -.8,.8 H443.8 a.8,.8 0 0 1 -.8,-.8 V31.8 a.8,.8 0 0 1 .8,-.8 Z" fill="#666"/><path d="M452.6,31 V34.6 H456 Z" fill="#cbcbcb"/><path d="M453,31.6 L455.6,34.2 H453Z" fill="#666"/><path d="M462,36.2 H469 L465.5,41 Z" fill="#666"/><path d="M489,32 H501 a1,1 0 0 1 1,1 V45 a1,1 0 0 1 -1,1 H490.5 L488,43.8 V33 a1,1 0 0 1 1,-1 Z" fill="#666"/><rect x="491" y="32.8" width="8" height="5" fill="#cbcbcb"/><rect x="496.2" y="32.8" width="1.6" height="5" fill="#666" opacity="0"/><rect x="492" y="41" width="6.4" height="5" fill="#cbcbcb"/><rect x="493.4" y="42.3" width="3.6" height="3.7" fill="#666"/><path d="M527.5,34 L522.5,38.3 L527.5,42.6" fill="none" stroke="#5f5f5f" stroke-width="1.9"/><path d="M523,38.3 H528.5 Q533.3,38.6 533.3,45" fill="none" stroke="#5f5f5f" stroke-width="1.9"/><path d="M541,36.2 H548 L544.5,41 Z" fill="#5f5f5f"/><path d="M567.5,34 L572.5,38.3 L567.5,42.6" fill="none" stroke="#8c8c8c" stroke-width="1.9"/><path d="M572,38.3 H566.5 Q561.7,38.6 561.7,45" fill="none" stroke="#8c8c8c" stroke-width="1.9"/><path d="M580,36.2 H587 L583.5,41 Z" fill="#8f8f8f"/><path d="M607.4,43 L615,35.8 L618,38.6 V36.8 H620 V40.5 L622.6,43 H620.6 V49 H617 V44.8 H613.4 V49 H609.4 V43 Z" fill="#7b7b7b"/><path d="M1139.5,34.6 L1146,37 V44.6 L1139.5,47.6 L1133,44.6 V37 Z" fill="#f07d1a"/><path d="M1139.5,34.6 L1146,37 L1139.5,39.6 L1133,37 Z" fill="#f9a04c"/><path d="M1139.5,39.6 L1146,37 V44.6 L1139.5,47.6 Z" fill="#d9640c"/><path d="M1691,37 L1699,45 M1699,37 L1691,45" stroke="#555" stroke-width="1.2"/><path d="M1718,40.4 H1731 M1724.5,34 V47" stroke="#666" stroke-width="2.1"/><path d="M1800,10.5 H1810" stroke="#777" stroke-width="1"/><path d="M1845.5,7.5 H1852.5 a1,1 0 0 1 1,1 V13.5 a1,1 0 0 1 -1,1 H1846.5 a1,1 0 0 1 -1,-1 Z M1847.5,7.5 V6.5 a1,1 0 0 1 1,-1 H1854.5 a1,1 0 0 1 1,1 V11.5 a1,1 0 0 1 -1,1 H1853.5" fill="none" stroke="#777" stroke-width="1"/><path d="M1891,5 L1901,15 M1901,5 L1891,15" stroke="#777" stroke-width="1"/><g><path d="M1751.6,43.6 A7.6,7.6 0 1 1 1757.8,46.6" fill="none" stroke="#5c5c5c" stroke-width="1.6"/><path d="M1752.8,34.6 L1759.5,33.4 L1763.2,36.2 L1760.3,38.5 L1762,40.8 L1757.8,43.6 L1753.8,40.8 Z" fill="#5c5c5c"/><path d="M1754,47.4 L1758.6,44.4 L1758.6,48.8 Z" fill="#5c5c5c"/></g><circle cx="1791" cy="38.9" r="7.9" fill="none" stroke="#5c5c5c" stroke-width="1"/><circle cx="1791" cy="38.9" r="6.2" fill="#5c5c5c"/><path d="M1790.6,34.6 V39.6 H1794.6" fill="none" stroke="#cbcbcb" stroke-width="1.2"/><path d="M1823.9,31.3 c.9,0 1.3,.5 1.3,1.2 c2.2,.8 3,2.8 3,5 c0,3 .8,4.300 2.400,5.700 v.8 h-13.400 v-.8 c1.600,-1.400 2.400,-2.700 2.400,-5.700 c0,-2.200 .8,-4.200 3,-5 c0,-.7 .4,-1.200 1.300,-1.200 Z" fill="#5c5c5c"/><path d="M1822,45.300 h3.800 l-1.900,1.600 Z" fill="#5c5c5c"/><circle cx="1828.3" cy="34.8" r="3" fill="#1a96dc"/><circle cx="1856.9" cy="39" r="8" fill="#5c5c5c"/><text x="1856.9" y="43.6" font-family="Liberation Sans, sans-serif" font-weight="bold" font-size="13" fill="#e0e0e0" text-anchor="middle">?</text><defs><linearGradient id="av" x1="0" y1="0" x2="0" y2="1"><stop offset="0" stop-color="#c5d0e0"/><stop offset="1" stop-color="#8e9db8"/></linearGradient><clipPath id="avc"><circle cx="1896" cy="39.1" r="12"/></clipPath></defs><circle cx="1896" cy="39.1" r="12" fill="url(#av)"/><g clip-path="url(#avc)" fill="#4d5b78"><ellipse cx="1896" cy="36" rx="5.2" ry="6.8"/><path d="M1884,52 c0,-6 4,-8 8,-9 h8 c4,1 8,3 8,9 Z"/><rect x="1893" y="40" width="6" height="5"/></g></svg>
<svg width="1921" height="1152" viewBox="0 0 1921 1152" style="position:absolute;left:0;top:0"><g transform="translate(530,76) scale(0.093701)"><rect x="84" y="64" width="32" height="32" rx="0" fill="#4a4a4a"/><rect x="374" y="64" width="32" height="32" rx="0" fill="#4a4a4a"/><rect x="84" y="352" width="32" height="32" rx="0" fill="#4a4a4a"/><path d="M128,80 H362 M100,108 V340 M390,108 V250 M128,368 H275" fill="none" stroke="#4a4a4a" stroke-width="8" stroke-linejoin="round" /><rect x="160" y="140" width="30" height="30" rx="0" fill="#4a4a4a"/><rect x="300" y="140" width="30" height="30" rx="0" fill="#4a4a4a"/><rect x="160" y="278" width="30" height="30" rx="0" fill="#4a4a4a"/><path d="M205,155 H288 M175,183 V266" fill="none" stroke="#4a4a4a" stroke-width="8" stroke-linejoin="round" /><path d="M320,178 Q305,272 205,297" fill="none" stroke="#4a4a4a" stroke-width="8" stroke-linejoin="round" /><rect x="324" y="258" width="52" height="147" rx="0" fill="#22a845"/><rect x="278" y="305" width="150" height="51" rx="0" fill="#22a845"/><polygon points="555,130 620,65 810,65 745,130" fill="#8ccbf9" /><polygon points="555,130 745,130 745,350 555,350" fill="#6aaee4" /><polygon points="745,130 810,65 810,295 745,350" fill="#4a93cd" /><polygon points="555,350 745,350 745,403 555,403" fill="#b9b9b9" /><polygon points="745,350 810,295 810,345 745,403" fill="#9e9e9e" /><path d="M848,340 V110" fill="none" stroke="#222" stroke-width="9" stroke-linejoin="round" /><polygon points="848,68 820,120 876,120" fill="#222" /><path d="M1320,150 Q1170,45 1035,125" fill="none" stroke="#222" stroke-width="8" stroke-linejoin="round" /><polygon points="1003,152 1048,95 1068,148" fill="#222" /><path d="M1005,215 Q1170,85 1340,205 L1275,265 Q1170,195 1065,265 Z" fill="#8ccbf9" /><path d="M1065,265 Q1170,195 1275,265 L1275,365 Q1170,300 1065,375 Z" fill="#6aaee4" /><polygon points="1005,215 1065,265 1065,375 1005,320" fill="#4a93cd" /><polygon points="1282,268 1338,215 1338,300 1282,360" fill="#fff" stroke="#444" stroke-width="9" stroke-linejoin="round" /><polygon points="1465,130 1525,68 1800,68 1745,130" fill="#f6f6f6" stroke="#505050" stroke-width="8" stroke-linejoin="round" /><polygon points="1745,130 1800,68 1800,345 1745,400" fill="#bcbcbc" stroke="#505050" stroke-width="8" stroke-linejoin="round" /><polygon points="1465,130 1745,130 1745,400 1465,400" fill="#dcdcdc" stroke="#505050" stroke-width="8" stroke-linejoin="round" /><clipPath id="hc"><circle cx="1607" cy="260" r="70"/></clipPath><circle cx="1607" cy="260" r="88" fill="#fff" stroke="#505050" stroke-width="7"/><circle cx="1607" cy="260" r="70" fill="#5da6e0"/><circle cx="1655" cy="195" r="80" fill="#fff" clip-path="url(#hc)"/><circle cx="1607" cy="260" r="70" fill="none" stroke="#505050" stroke-width="5"/><polygon points="1580,512 1645,512 1612.5,550" fill="#2a2a2a" /></g><g transform="translate(700,76) scale(0.093701)"><path d="M190,122 H322 M145,168 V300 M190,346 H322" fill="none" stroke="#555" stroke-width="8" stroke-linejoin="round" /><rect x="110" y="90" width="68" height="66" rx="0" fill="#fff" stroke="#555" stroke-width="8"/><rect x="332" y="88" width="73" height="70" rx="0" fill="#64ade6"/><rect x="108" y="310" width="72" height="72" rx="0" fill="#64ade6"/><rect x="332" y="310" width="73" height="72" rx="0" fill="#64ade6"/><path d="M660,88 H745 L885,230 V300 L800,398 H640 Q567,398 567,330 V190 Q567,120 660,88 Z" fill="#a27ae2" stroke="#8b61cd" stroke-width="8" stroke-linejoin="round" /><path d="M660,92 H745 L800,175 H600 Q610,120 660,92Z" fill="#c9a4ff" /><path d="M800,175 L885,235 V300 L800,395 Z" fill="#8a62c8" /><path d="M830,255 L870,225 V300 L830,345 Z" fill="#7a52b8" /><rect x="575" y="178" width="220" height="214" rx="50" fill="#a982e8"/><path d="M580,275 H795 M682,100 V392" fill="none" stroke="#8658c8" stroke-width="7" stroke-linejoin="round" /><path d="M590,360 Q600,385 640,388 H780" fill="none" stroke="#d9c4ff" stroke-width="10" stroke-linejoin="round" /><polygon points="815.0,63.0 828.8,121.7 880.1,89.9 848.3,141.2 907.0,155.0 848.3,168.8 880.1,220.1 828.8,188.3 815.0,247.0 801.2,188.3 749.9,220.1 781.7,168.8 723.0,155.0 781.7,141.2 749.9,89.9 801.2,121.7" fill="#ffa800" /><path d="M1012,60 V600" fill="none" stroke="#dadada" stroke-width="14" stroke-linejoin="round" /><path d="M1392,128 Q1478,160 1506,255 M1636,152 Q1548,178 1514,255 M1510,240 V330" fill="none" stroke="#4d9fd9" stroke-width="40" stroke-linejoin="round" /><polygon points="1497,214 1540,209 1514,262" fill="#f2f2f2" /><rect x="1358" y="65" width="70" height="70" rx="0" fill="#fff" stroke="#555" stroke-width="8"/><polygon points="1645,85 1695,145 1640,182 1597,125" fill="#fff" stroke="#555" stroke-width="8" stroke-linejoin="round" /><circle cx="1510" cy="348" r="56" fill="#4d9fd9"/><circle cx="1510" cy="348" r="36" fill="#f4f4f4" stroke="#555" stroke-width="7"/><circle cx="1510" cy="348" r="15" fill="none" stroke="#555" stroke-width="5"/><path d="M1495,348 H1525 M1510,333 V363" stroke="#555" stroke-width="4"/><polygon points="1805,515 1868,515 1836.5,552" fill="#2a2a2a" /></g><g transform="translate(890,76) scale(0.093701)"><path d="M-10,60 V600" fill="none" stroke="#dadada" stroke-width="14" stroke-linejoin="round" /><polygon points="130,130 190,68 250,68 195,130" fill="#f6f6f6" /><rect x="130" y="130" width="67" height="270" rx="0" fill="#dcdcdc"/><path d="M192,400 H130 V130 L190,68 H247" fill="none" stroke="#505050" stroke-width="8" stroke-linejoin="round" /><polygon points="205,130 265,68 360,68 300,130" fill="#8ccbf9" /><rect x="205" y="130" width="95" height="270" rx="0" fill="#6aaee4"/><polygon points="300,130 360,68 360,340 300,400" fill="#4a93cd" /><path d="M335,230 H400" fill="none" stroke="#f2f2f2" stroke-width="26" stroke-linejoin="round" /><path d="M340,230 H400" fill="none" stroke="#222" stroke-width="9" stroke-linejoin="round" /><polygon points="440,230 395,203 395,257" fill="#222" /><path d="M580,150 L655,68 H770 L705,140 Z" fill="#f6f6f6" /><path d="M580,400 V150 H720 Q835,170 835,290 V400 Z" fill="#dcdcdc" /><polygon points="835,290 915,225 915,325 835,400" fill="#bcbcbc" /><path d="M705,132 L775,65 Q900,100 915,215 L850,275 Q830,160 705,132 Z" fill="#6aaee4" /><path d="M755,68 H655 L580,150 V400 H835 L915,325 V232" fill="none" stroke="#505050" stroke-width="8" stroke-linejoin="round" /><polygon points="1040,130 1115,68 1375,68 1295,130" fill="#f6f6f6" stroke="#505050" stroke-width="8" stroke-linejoin="round" /><polygon points="1295,130 1375,68 1375,325 1295,400" fill="#bcbcbc" stroke="#505050" stroke-width="8" stroke-linejoin="round" /><rect x="1040" y="130" width="255" height="270" rx="0" fill="#dcdcdc" stroke="#505050" stroke-width="8"/><rect x="1078" y="188" width="177" height="174" rx="0" fill="#f4f4f4"/><polygon points="1080,195 1160,195 1160,280 1080,356" fill="#4a93cd" /><polygon points="1080,358 1160,280 1248,280 1248,358" fill="#8ccbf9" /><polygon points="1605,110 1650,65 1835,65 1800,110" fill="#8ccbf9" /><rect x="1605" y="110" width="195" height="185" rx="0" fill="#6aaee4"/><polygon points="1800,110 1835,65 1835,255 1800,295" fill="#4a93cd" /><polygon points="1495,215 1540,172 1608,172 1608,215" fill="#8ccbf9" /><rect x="1495" y="215" width="195" height="188" rx="0" fill="#6aaee4"/><polygon points="1690,295 1730,295 1730,360 1690,403" fill="#4a93cd" /><polygon points="1600,515 1663,515 1631.5,552" fill="#2a2a2a" /></g><g transform="translate(1065,76) scale(0.093701)"><polygon points="110,130 170,65 405,65 345,130" fill="#8ccbf9" /><rect x="110" y="130" width="235" height="105" rx="0" fill="#6aaee4"/><polygon points="345,130 405,65 405,170 345,235" fill="#4a93cd" /><polygon points="345,290 405,235 405,330 345,390" fill="#bcbcbc" stroke="#505050" stroke-width="8" stroke-linejoin="round" /><rect x="110" y="290" width="235" height="100" rx="0" fill="#dcdcdc"/><path d="M110,290 V390 H345" fill="none" stroke="#505050" stroke-width="8" stroke-linejoin="round" /><path d="M85,262 H350 L425,180" fill="none" stroke="#2f95e8" stroke-width="10" stroke-linejoin="round" /><path d="M600,235 H830 M713,120 V350" fill="none" stroke="#2e2e2e" stroke-width="24" stroke-linejoin="round" /><polygon points="713,68 662,152 765,152" fill="#2e2e2e" /><polygon points="713,402 662,318 765,318" fill="#2e2e2e" /><polygon points="546,235 632,185 632,285" fill="#2e2e2e" /><polygon points="882,235 796,185 796,285" fill="#2e2e2e" /><path d="M990,60 V600" fill="none" stroke="#dadada" stroke-width="14" stroke-linejoin="round" /><polygon points="1122,150 1160,110 1290,110 1250,150" fill="#8ccbf9" /><rect x="1122" y="150" width="128" height="125" rx="0" fill="#6aaee4"/><polygon points="1250,150 1290,110 1290,235 1250,275" fill="#4a93cd" /><polygon points="1250,275 1290,235 1415,235 1380,275" fill="#f6f6f6" stroke="#505050" stroke-width="7" stroke-linejoin="round" /><polygon points="1380,275 1415,235 1415,365 1380,400" fill="#bcbcbc" stroke="#505050" stroke-width="7" stroke-linejoin="round" /><rect x="1122" y="275" width="128" height="125" rx="0" fill="#dcdcdc" stroke="#505050" stroke-width="7"/><rect x="1250" y="275" width="130" height="125" rx="0" fill="#dcdcdc" stroke="#505050" stroke-width="7"/><polygon points="1370.0,63.0 1383.8,121.7 1435.1,89.9 1403.3,141.2 1462.0,155.0 1403.3,168.8 1435.1,220.1 1383.8,188.3 1370.0,247.0 1356.2,188.3 1304.9,220.1 1336.7,168.8 1278.0,155.0 1336.7,141.2 1304.9,89.9 1356.2,121.7" fill="#ffa800" /><polygon points="1605,172 1680,95 1735,95 1735,200 1690,215 1690,300 1610,372" fill="#e0e0e0" stroke="#505050" stroke-width="8" stroke-linejoin="round" /><path d="M1680,100 Q1700,85 1730,100 V195 Q1700,215 1680,200 Z" fill="#ececec" stroke="#505050" stroke-width="6" stroke-linejoin="round" /><polygon points="1820,110 1895,185 1895,380 1820,312" fill="#e0e0e0" stroke="#505050" stroke-width="8" stroke-linejoin="round" /><rect x="1765" y="185" width="65" height="127" rx="22" fill="#c8c8c8" stroke="#505050" stroke-width="7"/><path d="M1703,225 V275 M1800,150 V212" fill="none" stroke="#2f95e8" stroke-width="9" stroke-linejoin="round" /><polygon points="1785,515 1848,515 1816.5,552" fill="#2a2a2a" /></g><g transform="translate(1250,76) scale(0.093701)"><path d="M55,60 V600 M1150,60 V600" fill="none" stroke="#dadada" stroke-width="14" stroke-linejoin="round" /><path d="M225,380 V240 L268,205 H350 V380 Z" fill="#dcdcdc" /><path d="M350,380 H225 V240 L268,205" fill="none" stroke="#505050" stroke-width="8" stroke-linejoin="round" /><polygon points="365,305 405,345 365,382" fill="#3cb371" /><polygon points="395,78 532,240 425,347 262,183" fill="#e8935a" stroke="#dd864c" stroke-width="5" stroke-linejoin="round" /><polygon points="300,190 390,190 355,240" fill="#f6d9c6" /><polygon points="365,250 430,195 430,322" fill="#86ad6a" /><path d="M365,243 L432,183" fill="none" stroke="#fff" stroke-width="16" stroke-linejoin="round" stroke-linecap="round"/><path d="M365,243 L432,183" fill="none" stroke="#3cb371" stroke-width="7" stroke-linejoin="round" stroke-dasharray="14,8"/><polygon points="688,150 780,68 862,68 775,150" fill="#f6f6f6" stroke="#505050" stroke-width="8" stroke-linejoin="round" /><rect x="688" y="150" width="89" height="240" rx="0" fill="#dcdcdc"/><path d="M777,390 H688 V150" fill="none" stroke="#505050" stroke-width="8" stroke-linejoin="round" /><polygon points="780,150 875,68 875,300 780,390" fill="#58c47e" /><polygon points="910,150 1000,68 1000,300 910,390" fill="#e8935a" /><polygon points="898,515 960,515 929.0,552" fill="#2a2a2a" /><path d="M1435,150 V245 M1725,150 V245 M1470,197 H1690" fill="none" stroke="#5a5a5a" stroke-width="8" stroke-linejoin="round" /><polygon points="1442,197 1488,173 1488,221" fill="#5a5a5a" /><polygon points="1718,197 1672,173 1672,221" fill="#5a5a5a" /><rect x="1430" y="258" width="298" height="60" rx="0" fill="#ffa800"/><path d="M1447,258 V282 M1480,258 V274 M1513,258 V282 M1546,258 V274 M1579,258 V282 M1612,258 V274 M1645,258 V282 M1678,258 V274 M1711,258 V282 " fill="none" stroke="#b87a00" stroke-width="6" stroke-linejoin="round" /><polygon points="1770,515 1835,515 1802.5,552" fill="#2a2a2a" /></g><g transform="translate(1430,76) scale(0.093701)"><path d="M72,60 V600 M1108,60 V600" fill="none" stroke="#dadada" stroke-width="14" stroke-linejoin="round" /><polygon points="258,170 335,90 530,90 465,170" fill="#fbfbfb" stroke="#333" stroke-width="8" stroke-linejoin="round" /><polygon points="465,170 530,90 530,305 465,368" fill="#c5c8d0" stroke="#333" stroke-width="8" stroke-linejoin="round" /><rect x="258" y="170" width="207" height="198" rx="0" fill="#e3e5e9" stroke="#333" stroke-width="8"/><path d="M215,300 Q235,240 300,238 V200 L385,262 L300,328 V292 Q250,285 215,300 Z" fill="#3a3d42" stroke="#f4f4f4" stroke-width="12" stroke-linejoin="round" /><path d="M215,300 Q235,240 300,238 V200 L385,262 L300,328 V292 Q250,285 215,300 Z" fill="#3a3d42" /><rect x="672" y="75" width="310" height="308" rx="0" fill="#8ccbf9" stroke="#5aa3dc" stroke-width="4"/><path d="M674,285 Q760,145 835,245 Q865,290 885,295 Q925,235 980,330 V381 H674 Z" fill="#4090c8" /><circle cx="895" cy="158" r="36" fill="#ffffc4"/><polygon points="758,515 822,515 790.0,552" fill="#2a2a2a" /><rect x="1312" y="32" width="408" height="405" rx="0" fill="#0696d7"/><rect x="1350" y="68" width="290" height="227" fill="none" stroke="#86ea86" stroke-width="7" stroke-dasharray="32,17"/><polygon points="1570,215 1570,372 1606,342 1633,406 1662,393 1634,331 1682,326" fill="#fff" /><polygon points="1697,515 1760,515 1728.5,552" fill="#2a2a2a" /></g><text x="551.6" y="70.0" textLength="29.6" lengthAdjust="spacingAndGlyphs" font-family="Liberation Sans, sans-serif" font-size="11" font-weight="normal" fill="#1f95d6">SOLID</text><text x="629.3" y="70.0" textLength="46.6" lengthAdjust="spacingAndGlyphs" font-family="Liberation Sans, sans-serif" font-size="11" font-weight="normal" fill="#3a3a3a">SURFACE</text><text x="721.8" y="70.0" textLength="28.0" lengthAdjust="spacingAndGlyphs" font-family="Liberation Sans, sans-serif" font-size="11" font-weight="normal" fill="#3a3a3a">MESH</text><text x="795.1" y="70.0" textLength="68.0" lengthAdjust="spacingAndGlyphs" font-family="Liberation Sans, sans-serif" font-size="11" font-weight="normal" fill="#3a3a3a">SHEET METAL</text><text x="908.0" y="70.0" textLength="41.7" lengthAdjust="spacingAndGlyphs" font-family="Liberation Sans, sans-serif" font-size="11" font-weight="normal" fill="#3a3a3a">PLASTIC</text><text x="996.0" y="70.0" textLength="44.0" lengthAdjust="spacingAndGlyphs" font-family="Liberation Sans, sans-serif" font-size="11" font-weight="normal" fill="#3a3a3a">UTILITIES</text><rect x="539.5" y="75.5" width="54.2" height="3.2" fill="#1f93d3"/><text x="636.7" y="130.0" textLength="38.0" lengthAdjust="spacingAndGlyphs" font-family="Liberation Sans, sans-serif" font-size="11" font-weight="normal" fill="#3a3a3a">CREATE</text><text x="810.6" y="130.0" textLength="54.8" lengthAdjust="spacingAndGlyphs" font-family="Liberation Sans, sans-serif" font-size="11" font-weight="normal" fill="#3a3a3a">AUTOMATE</text><text x="998.2" y="130.0" textLength="38.0" lengthAdjust="spacingAndGlyphs" font-family="Liberation Sans, sans-serif" font-size="11" font-weight="normal" fill="#3a3a3a">MODIFY</text><text x="1174.2" y="130.0" textLength="54.8" lengthAdjust="spacingAndGlyphs" font-family="Liberation Sans, sans-serif" font-size="11" font-weight="normal" fill="#3a3a3a">ASSEMBLE</text><text x="1269.2" y="130.0" textLength="61.9" lengthAdjust="spacingAndGlyphs" font-family="Liberation Sans, sans-serif" font-size="11" font-weight="normal" fill="#3a3a3a">CONSTRUCT</text><text x="1372.3" y="130.0" textLength="40.8" lengthAdjust="spacingAndGlyphs" font-family="Liberation Sans, sans-serif" font-size="11" font-weight="normal" fill="#3a3a3a">INSPECT</text><text x="1462.8" y="130.0" textLength="35.2" lengthAdjust="spacingAndGlyphs" font-family="Liberation Sans, sans-serif" font-size="11" font-weight="normal" fill="#3a3a3a">INSERT</text><text x="1548.3" y="130.0" textLength="37.7" lengthAdjust="spacingAndGlyphs" font-family="Liberation Sans, sans-serif" font-size="11" font-weight="normal" fill="#3a3a3a">SELECT</text><text x="443.3" y="99.3" textLength="37.7" lengthAdjust="spacingAndGlyphs" font-family="Liberation Sans, sans-serif" font-size="11.5" font-weight="bold" fill="#2e2e2e">DESIGN</text><polygon points="485.8,94.6 492,94.6 488.9,98.2" fill="#2a2a2a"/></svg>
<svg width="1921" height="1152" viewBox="0 0 1921 1152" style="position:absolute;left:0;top:0"><rect x="405.5" y="144.5" width="299" height="24" fill="#f2f2f2" stroke="#c2c2c2" stroke-width="1"/><path d="M415,153.6 V160.4 L409.8,157 Z M420.4,153.6 V160.4 L415.2,157 Z" fill="#222"/><text x="430.2" y="159.8" textLength="52.1" lengthAdjust="spacingAndGlyphs" font-family="Liberation Sans, sans-serif" font-size="10.6" font-weight="normal" fill="#555">BROWSER</text><circle cx="688.8" cy="156.4" r="4.6" fill="#1a1a1a"/><rect x="686" y="155.7" width="5.6" height="1.4" fill="#fff"/><path d="M700.7,151.5 V162 " stroke="#8a8a8a" stroke-width="1"/><path d="M702.6,152.5 V161" stroke="#bbb" stroke-width="1"/><rect x="441" y="174.2" width="147.7" height="19.8" fill="#ececec"/><defs><linearGradient id="tg" x1="0" y1="1" x2="1" y2="0"><stop offset="0" stop-color="#111"/><stop offset=".45" stop-color="#444"/><stop offset="1" stop-color="#c8c8c8"/></linearGradient></defs><path d="M422,189.6 H432.8 V178.6 Z" fill="url(#tg)" stroke="#222" stroke-width=".8"/><path d="M444.2,184.0 Q452.2,174.6 460.2,184.0 Q452.2,193.4 444.2,184.0 Z" fill="#a2a2a2"/><circle cx="452.2" cy="184.0" r="3.2" fill="#ececec"/><circle cx="452.2" cy="184.0" r="1.7" fill="#a2a2a2"/><rect x="466" y="176.2" width="98" height="15.6" fill="#8e8e8e"/><path d="M469.8,180.4 L472.4,176.6 H483 a1.2,1.2 0 0 1 1.200,1.2 V186.8 L481.400,191.4 H470.8 a1,1 0 0 1 -1,-1 Z" fill="#fafafa" stroke="#3a3a3a" stroke-width="1"/><path d="M470.3,180.6 H481 V191" fill="none" stroke="#c5c8d2" stroke-width="1"/><path d="M481,180.6 L484,177" stroke="#c5c8d2" stroke-width="1"/><rect x="470.6" y="181.200" width="9.8" height="9.4" fill="#dfe1e8"/><text x="498.9" y="188.1" textLength="55.2" lengthAdjust="spacingAndGlyphs" font-family="Liberation Sans, sans-serif" font-size="11" font-weight="bold" fill="#fff">(Unsaved)</text><circle cx="574.4" cy="184.6" r="6" fill="#fff" stroke="#1a1a1a" stroke-width="1.1"/><circle cx="574.4" cy="184.6" r="2.3" fill="#1a1a1a"/><rect x="459" y="198.1" width="133.8" height="19.8" fill="#f0f0f0"/><path d="M441.6,202.3 L450,208.5 L441.6,214.7 Z" fill="#e6e6ec" stroke="#222" stroke-width="1.3" stroke-linejoin="round"/><path d="M477.51,206.91 L477.51,209.29 L475.62,209.45 L474.92,211.12 L476.15,212.57 L474.47,214.25 L473.02,213.02 L471.35,213.72 L471.19,215.61 L468.81,215.61 L468.65,213.72 L466.98,213.02 L465.53,214.25 L463.85,212.57 L465.08,211.12 L464.38,209.45 L462.49,209.29 L462.49,206.91 L464.38,206.75 L465.08,205.08 L463.85,203.63 L465.53,201.95 L466.98,203.18 L468.65,202.48 L468.81,200.59 L471.19,200.59 L471.35,202.48 L473.02,203.18 L474.47,201.95 L476.15,203.63 L474.92,205.08 L475.62,206.75Z" fill="#9a9a9a" stroke="#9a9a9a" stroke-width="1" stroke-linejoin="round"/><circle cx="470.0" cy="208.1" r="3.00" fill="#f0f0f0"/><text x="492.1" y="211.8" textLength="89.6" lengthAdjust="spacingAndGlyphs" font-family="Liberation Sans, sans-serif" font-size="11" font-weight="normal" fill="#262626">Document Settings</text><rect x="459" y="222.1" width="109.9" height="19.8" fill="#f0f0f0"/><path d="M441.6,226.3 L450,232.5 L441.6,238.7 Z" fill="#e6e6ec" stroke="#222" stroke-width="1.3" stroke-linejoin="round"/><path d="M462.0,225.6 h7.2 v1.4 h-7.2 Z M462.0,227.9 h8.2 l1,-1.2 h6.9 v11.6 h-16.1 Z" fill="#999"/><text x="492.1" y="235.7" textLength="67.7" lengthAdjust="spacingAndGlyphs" font-family="Liberation Sans, sans-serif" font-size="11" font-weight="normal" fill="#262626">Named Views</text><rect x="459" y="246.0" width="94.9" height="19.8" fill="#f0f0f0"/><path d="M441.6,250.2 L450,256.4 L441.6,262.6 Z" fill="#e6e6ec" stroke="#222" stroke-width="1.3" stroke-linejoin="round"/><path d="M462.4,256.0 Q470.0,247.4 477.6,256.0 Q470.0,264.6 462.4,256.0 Z" fill="none" stroke="#a8a8a8" stroke-width="1"/><circle cx="470.0" cy="256.0" r="2.6" fill="none" stroke="#a8a8a8" stroke-width="1"/><path d="M464.5,250.5 L475.5,261.5" stroke="#8a8a8a" stroke-width="1"/><path d="M487.0,249.5 h7.2 v1.4 h-7.2 Z M487.0,251.8 h8.2 l1,-1.2 h6.9 v11.6 h-16.1 Z" fill="#999"/><text x="517.2" y="259.8" textLength="27.7" lengthAdjust="spacingAndGlyphs" font-family="Liberation Sans, sans-serif" font-size="11" font-weight="normal" fill="#262626">Origin</text><rect x="459" y="270.0" width="102.9" height="19.8" fill="#f0f0f0"/><path d="M441.6,274.2 L450,280.4 L441.6,286.6 Z" fill="#e6e6ec" stroke="#222" stroke-width="1.3" stroke-linejoin="round"/><path d="M462.0,280.0 Q470.0,270.6 478.0,280.0 Q470.0,289.4 462.0,280.0 Z" fill="#9a9a9a"/><circle cx="470.0" cy="280.0" r="3.2" fill="#f0f0f0"/><circle cx="470.0" cy="280.0" r="1.7" fill="#9a9a9a"/><path d="M487.0,273.5 h7.2 v1.4 h-7.2 Z M487.0,275.8 h8.2 l1,-1.2 h6.9 v11.6 h-16.1 Z" fill="#999"/><text x="517.2" y="283.8" textLength="32.8" lengthAdjust="spacingAndGlyphs" font-family="Liberation Sans, sans-serif" font-size="11" font-weight="normal" fill="#262626">Bodies</text><rect x="459" y="294.0" width="114.9" height="19.8" fill="#f0f0f0"/><path d="M441.6,298.2 L450,304.4 L441.6,310.6 Z" fill="#e6e6ec" stroke="#222" stroke-width="1.3" stroke-linejoin="round"/><path d="M462.0,304.0 Q470.0,294.6 478.0,304.0 Q470.0,313.4 462.0,304.0 Z" fill="#9a9a9a"/><circle cx="470.0" cy="304.0" r="3.2" fill="#f0f0f0"/><circle cx="470.0" cy="304.0" r="1.7" fill="#9a9a9a"/><path d="M487.0,297.5 h7.2 v1.4 h-7.2 Z M487.0,299.8 h8.2 l1,-1.2 h6.9 v11.6 h-16.1 Z" fill="#999"/><text x="517.2" y="307.8" textLength="44.8" lengthAdjust="spacingAndGlyphs" font-family="Liberation Sans, sans-serif" font-size="11" font-weight="normal" fill="#262626">Sketches</text><rect x="405.5" y="1073.5" width="299" height="23.500" fill="#f2f2f2" stroke="#c2c2c2" stroke-width="1"/><text x="430.2" y="1089.0" textLength="57.1" lengthAdjust="spacingAndGlyphs" font-family="Liberation Sans, sans-serif" font-size="10.6" font-weight="normal" fill="#555">COMMENTS</text><circle cx="688.4" cy="1085.3" r="4.6" fill="#1a1a1a"/><path d="M685.6,1085.3 H691.2 M688.4,1082.5 V1088.1" stroke="#fff" stroke-width="1.4"/><path d="M700.7,1080 V1090.500 " stroke="#8a8a8a" stroke-width="1"/><path d="M702.6,1081 V1089.500" stroke="#bbb" stroke-width="1"/></svg>
<svg width="1921" height="1152" viewBox="0 0 1921 1152" style="position:absolute;left:0;top:0"><rect x="1042.300" y="1074" width="236.300" height="23.600" fill="#f1f1f1"/><path d="M1045.800,1086.200 A7.500,2.800 0 1 1 1047.200,1088.600" fill="none" stroke="#222" stroke-width="1.200"/><path d="M1052,1093.6 V1082.200 H1050.500 L1053.4,1078.3 L1056.300,1082.200 H1054.800 V1093.600 Z" fill="#fff" stroke="#222" stroke-width="1"/><path d="M1060.700,1086.700 A7.500,2.800 0 0 1 1047.200,1088.600" fill="none" stroke="#222" stroke-width="1.200"/><polygon points="1046.2,1089.9 1050.2,1087.0 1050.6,1091.8" fill="#111"/><polygon points="1066.1,1084.3 1071.9,1084.3 1069.0,1087.8" fill="#222"/><polygon points="1080,1083 1083.8,1078.500 1086.6,1080.6 1090,1079.3 1090.8,1083" fill="#5a5f68"/><rect x="1078.9" y="1083.600" width="14.4" height="9.6" fill="#fff" stroke="#3a3f4a" stroke-width="1.4"/><rect x="1081.900" y="1086.6" width="8.400" height="3.800" fill="#b8bfd0" stroke="#3a3f4a" stroke-width="1"/><path d="M1108.600,1093.300 C1107.300,1091.300 1105.400,1088.300 1104.700,1086.600 C1104.200,1085.300 1105.600,1084.700 1106.500,1085.800 L1108.300,1088.100 L1107.700,1081 C1107.600,1079.700 1109.300,1079.500 1109.600,1080.800 L1110.600,1085 L1110.700,1079.400 C1110.700,1078 1112.600,1078 1112.700,1079.400 L1113.100,1085 L1114.100,1080.300 C1114.400,1079 1116.100,1079.300 1116,1080.600 L1115.500,1085.700 L1117.300,1082.600 C1118,1081.500 1119.500,1082.200 1119.100,1083.400 C1118.300,1086 1117.500,1089.600 1115.700,1093.300 Z" fill="#f4f6fa" stroke="#2a2a2a" stroke-width="1" stroke-linejoin="round"/><path d="M1137.800,1088.300 L1141.400,1091.500" stroke="#2a2a2a" stroke-width="2.600" stroke-linecap="round"/><circle cx="1134.700" cy="1085" r="4.500" fill="#d9e9ec" stroke="#2a2a2a" stroke-width="1.200"/><path d="M1141.500,1080.400 H1145.700 M1143.600,1078.300 V1082.500 M1141.500,1084.700 H1145.700" stroke="#2a2a2a" stroke-width="1"/><rect x="1156.500" y="1078.300" width="15.200" height="15.200" fill="none" stroke="#2a2a2a" stroke-width="1" stroke-dasharray="2.200 1.800"/><path d="M1166.800,1088.800 L1171,1093" stroke="#2a2a2a" stroke-width="2.800" stroke-linecap="round"/><circle cx="1162.500" cy="1084.300" r="5.900" fill="#d5e8e8" stroke="#2a2a2a" stroke-width="1.300"/><polygon points="1177.1,1084.3 1183.0,1084.3 1180.0,1087.7" fill="#222"/><rect x="1189.900" y="1078.900" width="14.600" height="11.600" rx="1.200" fill="#f8f8f8" stroke="#444" stroke-width="1"/><rect x="1191.800" y="1080.700" width="10.800" height="7.800" rx=".8" fill="#9ab8e0" stroke="#27468a" stroke-width="1"/><path d="M1194.600,1091 H1199.800 L1200.800,1093.400 H1193.600 Z" fill="#fafafa" stroke="#777" stroke-width=".7"/><polygon points="1207.6,1084.3 1213.4,1084.3 1210.5,1087.7" fill="#222"/><defs><linearGradient id="gg" x1="0" y1="0" x2="0" y2="1"><stop offset="0" stop-color="#4e4e52"/><stop offset="1" stop-color="#7a8298"/></linearGradient><linearGradient id="gc" x1="0" y1="0" x2="0" y2="1"><stop offset="0" stop-color="#fff"/><stop offset="1" stop-color="#d4d9e6"/></linearGradient></defs><rect x="1220.100" y="1078.400" width="15.800" height="15.300" rx="1" fill="url(#gg)"/><g fill="url(#gc)"><rect x="1221.2" y="1079.5" width="2" height="1.900"/><rect x="1221.2" y="1082.5" width="2" height="1.900"/><rect x="1221.2" y="1085.4" width="2" height="1.900"/><rect x="1221.2" y="1088.3" width="2" height="1.900"/><rect x="1221.2" y="1091.3" width="2" height="1.900"/><rect x="1224.2" y="1079.5" width="2" height="1.900"/><rect x="1224.2" y="1082.5" width="2" height="1.900"/><rect x="1224.2" y="1085.4" width="2" height="1.900"/><rect x="1224.2" y="1088.3" width="2" height="1.900"/><rect x="1224.2" y="1091.3" width="2" height="1.900"/><rect x="1227.2" y="1079.5" width="2" height="1.900"/><rect x="1227.2" y="1082.5" width="2" height="1.900"/><rect x="1227.2" y="1085.4" width="2" height="1.900"/><rect x="1227.2" y="1088.3" width="2" height="1.900"/><rect x="1227.2" y="1091.3" width="2" height="1.900"/><rect x="1230.2" y="1079.5" width="2" height="1.900"/><rect x="1230.2" y="1082.5" width="2" height="1.900"/><rect x="1230.2" y="1085.4" width="2" height="1.900"/><rect x="1230.2" y="1088.3" width="2" height="1.900"/><rect x="1230.2" y="1091.3" width="2" height="1.900"/><rect x="1233.2" y="1079.5" width="2" height="1.900"/><rect x="1233.2" y="1082.5" width="2" height="1.900"/><rect x="1233.2" y="1085.4" width="2" height="1.900"/><rect x="1233.2" y="1088.3" width="2" height="1.900"/><rect x="1233.2" y="1091.3" width="2" height="1.900"/></g><rect x="1221" y="1079.300" width="14" height="13.600" fill="url(#gc)" opacity="0"/><polygon points="1238.3,1084.3 1244.1,1084.3 1241.2,1087.7" fill="#222"/><rect x="1251.2" y="1079.4" width="6.800" height="5.600" rx=".8" fill="#8fb0dc" stroke="#27468a" stroke-width="1.100"/><rect x="1253.2" y="1081.4" width="2.800" height="1.600" fill="#b4cbea" stroke="#6a8cc4" stroke-width=".5"/><rect x="1259.0" y="1079.4" width="6.800" height="5.600" rx=".8" fill="#8fb0dc" stroke="#27468a" stroke-width="1.100"/><rect x="1261.0" y="1081.4" width="2.800" height="1.600" fill="#b4cbea" stroke="#6a8cc4" stroke-width=".5"/><rect x="1251.2" y="1086.0" width="6.800" height="5.600" rx=".8" fill="#8fb0dc" stroke="#27468a" stroke-width="1.100"/><rect x="1253.2" y="1088.0" width="2.800" height="1.600" fill="#b4cbea" stroke="#6a8cc4" stroke-width=".5"/><rect x="1259.0" y="1086.0" width="6.800" height="5.600" rx=".8" fill="#8fb0dc" stroke="#27468a" stroke-width="1.100"/><rect x="1261.0" y="1088.0" width="2.800" height="1.600" fill="#b4cbea" stroke="#6a8cc4" stroke-width=".5"/><polygon points="1269.2,1084.3 1275.0,1084.3 1272.1,1087.7" fill="#222"/></svg>
<svg width="1921" height="1152" viewBox="0 0 1921 1152" style="position:absolute;left:0;top:0"><rect x="412" y="1119.600" width="2" height="14.400" fill="#4a4a4e"/><polygon points="424,1119.600 424,1134 414.300,1126.800" fill="#4a4a4e"/><polygon points="446.200,1120.400 446.200,1133.600 436,1127" fill="#4a4a4e"/><rect x="447.300" y="1124" width="1.800" height="6" fill="#4a4a4e"/><polygon points="461.800,1119.200 461.800,1134.800 474,1127" fill="#4a4a4e"/><rect x="486" y="1124" width="1.800" height="6" fill="#4a4a4e"/><polygon points="489,1120.400 489,1133.600 499,1127" fill="#4a4a4e"/><polygon points="511.800,1119.600 511.800,1134 522,1126.800" fill="#4a4a4e"/><rect x="522.200" y="1119.600" width="2" height="14.400" fill="#4a4a4e"/><path d="M549.4,1118.9 H560.0 M547.9,1120.4 V1130.5 M561.5,1120.4 V1125.9 M549.4,1132.0 H554.9" stroke="#444" stroke-width="1" stroke-dasharray="3 1.500" fill="none"/><rect x="546.8" y="1117.8" width="2.200" height="2.200" fill="#1e90ff"/><rect x="560.4" y="1117.8" width="2.200" height="2.200" fill="#1e90ff"/><rect x="546.8" y="1130.9" width="2.200" height="2.200" fill="#1e90ff"/><path d="M557.2,1132.2 L561.1,1128.1 L562.7,1129.7 L558.8,1133.8 Z" fill="#f5b942"/><circle cx="562.2" cy="1128.4" r="1.400" fill="#e8333a"/><path d="M557.2,1132.2 L558.8,1133.8 L556.2,1134.6 Z" fill="#6a6a6a"/><polygon points="570.8,1120.0 573.1,1117.9 582.9,1117.9 580.6,1120.0" fill="#8ccbf9"/><rect x="570.8" y="1120.0" width="9.800" height="10.6" fill="#6aaee4"/><polygon points="580.6,1120.0 582.9,1117.9 582.9,1128.5 580.6,1130.6" fill="#4a93cd"/><polygon points="570.8,1130.6 580.6,1130.6 582.9,1128.5 582.9,1131.1 580.6,1133.3" fill="#b5b5b5"/><rect x="570.8" y="1130.6" width="9.800" height="2.700" fill="#bdbdbd"/><path d="M585.5,1130.6 V1119.5" stroke="#222" stroke-width="1"/><polygon points="585.5,1117.6 584.0,1121.0 587.0,1121.0" fill="#222"/><path d="M597.4,1118.9 H608.0 M595.9,1120.4 V1130.5 M609.5,1120.4 V1125.9 M597.4,1132.0 H602.9" stroke="#444" stroke-width="1" stroke-dasharray="3 1.500" fill="none"/><rect x="594.8" y="1117.8" width="2.200" height="2.200" fill="#1e90ff"/><rect x="608.4" y="1117.8" width="2.200" height="2.200" fill="#1e90ff"/><rect x="594.8" y="1130.9" width="2.200" height="2.200" fill="#1e90ff"/><path d="M605.2,1132.2 L609.1,1128.1 L610.7,1129.7 L606.8,1133.8 Z" fill="#f5b942"/><circle cx="610.2" cy="1128.4" r="1.400" fill="#e8333a"/><path d="M605.2,1132.2 L606.8,1133.8 L604.2,1134.6 Z" fill="#6a6a6a"/><polygon points="618.8,1120.0 621.1,1117.9 630.9,1117.9 628.6,1120.0" fill="#8ccbf9"/><rect x="618.8" y="1120.0" width="9.800" height="10.6" fill="#6aaee4"/><polygon points="628.6,1120.0 630.9,1117.9 630.9,1128.5 628.6,1130.6" fill="#4a93cd"/><polygon points="618.8,1130.6 628.6,1130.6 630.9,1128.5 630.9,1131.1 628.6,1133.3" fill="#b5b5b5"/><rect x="618.8" y="1130.6" width="9.800" height="2.700" fill="#bdbdbd"/><path d="M633.5,1130.6 V1119.5" stroke="#222" stroke-width="1"/><polygon points="633.5,1117.6 632.0,1121.0 635.0,1121.0" fill="#222"/><path d="M645.4,1118.9 H656.0 M643.9,1120.4 V1130.5 M657.5,1120.4 V1125.9 M645.4,1132.0 H650.9" stroke="#444" stroke-width="1" stroke-dasharray="3 1.500" fill="none"/><rect x="642.8" y="1117.8" width="2.200" height="2.200" fill="#1e90ff"/><rect x="656.4" y="1117.8" width="2.200" height="2.200" fill="#1e90ff"/><rect x="642.8" y="1130.9" width="2.200" height="2.200" fill="#1e90ff"/><path d="M653.2,1132.2 L657.1,1128.1 L658.7,1129.7 L654.8,1133.8 Z" fill="#f5b942"/><circle cx="658.2" cy="1128.4" r="1.400" fill="#e8333a"/><path d="M653.2,1132.2 L654.8,1133.8 L652.2,1134.6 Z" fill="#6a6a6a"/><polygon points="666.8,1120.0 669.1,1117.9 678.9,1117.9 676.6,1120.0" fill="#8ccbf9"/><rect x="666.8" y="1120.0" width="9.800" height="10.6" fill="#6aaee4"/><polygon points="676.6,1120.0 678.9,1117.9 678.9,1128.5 676.6,1130.6" fill="#4a93cd"/><polygon points="666.8,1130.6 676.6,1130.6 678.9,1128.5 678.9,1131.1 676.6,1133.3" fill="#b5b5b5"/><rect x="666.8" y="1130.6" width="9.800" height="2.700" fill="#bdbdbd"/><path d="M681.5,1130.6 V1119.5" stroke="#222" stroke-width="1"/><polygon points="681.5,1117.6 680.0,1121.0 683.0,1121.0" fill="#222"/><path d="M555.200,1137.100 V1142.500 H675.800 V1137.100 M579.1,1137.100 V1142.500 M603.0,1137.100 V1142.500 M627.0,1137.100 V1142.500 M651.1,1137.100 V1142.500 " fill="none" stroke="#c6c6c6" stroke-width="1.300"/><path d="M681.200,1112.200 H693 V1115.700 L688,1120.400 V1143.800 H686 V1120.400 L681.200,1115.700 Z" fill="#555"/><path d="M1906.52,1125.97 L1906.52,1128.03 L1904.88,1128.17 L1904.28,1129.62 L1905.34,1130.88 L1903.88,1132.34 L1902.62,1131.28 L1901.17,1131.88 L1901.03,1133.52 L1898.97,1133.52 L1898.83,1131.88 L1897.38,1131.28 L1896.12,1132.34 L1894.66,1130.88 L1895.72,1129.62 L1895.12,1128.17 L1893.48,1128.03 L1893.48,1125.97 L1895.12,1125.83 L1895.72,1124.38 L1894.66,1123.12 L1896.12,1121.66 L1897.38,1122.72 L1898.83,1122.12 L1898.97,1120.48 L1901.03,1120.48 L1901.17,1122.12 L1902.62,1122.72 L1903.88,1121.66 L1905.34,1123.12 L1904.28,1124.38 L1904.88,1125.83Z" fill="#6a6a6a" stroke="#6a6a6a" stroke-width="1" stroke-linejoin="round"/><circle cx="1900.0" cy="1127.0" r="2.40" fill="#f2f2f2"/></svg>
<svg width="1921" height="1152" viewBox="0 0 1921 1152" style="position:absolute;left:0;top:0"><defs><radialGradient id="vcs" cx=".5" cy=".5" r=".5"><stop offset="0" stop-color="#000" stop-opacity=".28"/><stop offset=".6" stop-color="#000" stop-opacity=".1"/><stop offset="1" stop-color="#000" stop-opacity="0"/></radialGradient><linearGradient id="vcl" x1="0" y1="0" x2="1" y2="1"><stop offset="0" stop-color="#f4f4f4"/><stop offset="1" stop-color="#dedede"/></linearGradient><linearGradient id="vcr" x1="0" y1="0" x2="0" y2="1"><stop offset="0" stop-color="#f0f0f0"/><stop offset="1" stop-color="#dcdcdc"/></linearGradient></defs><ellipse cx="1856" cy="236" rx="44" ry="13" fill="url(#vcs)" transform="rotate(6 1856 236)"/><polygon points="1823.0,181.1 1863.7,188.1 1863.7,241.6 1825.0,226.4" fill="url(#vcl)"/><polygon points="1863.7,188.1 1890.6,179.1 1888.7,223.7 1863.7,241.6" fill="url(#vcr)"/><polygon points="1823.0,181.1 1854.7,174.1 1890.6,179.1 1863.7,188.1" fill="#f6f6f6"/><polygon points="1823.0,181.1 1854.7,174.1 1890.6,179.1 1863.7,188.1" fill="none" stroke="#7a7a7a" stroke-width=".7" stroke-dasharray="4 2.500"/><path d="M1823.0,181.1 L1825.0,226.4 M1890.6,179.1 L1888.7,223.7" stroke="#8a8a8a" stroke-width=".7" stroke-dasharray="4 2.500"/><rect x="1855.500" y="190.500" width="13.500" height="7" fill="#e4e6ee" opacity=".7"/><path d="M1840,182.500 L1846,181.200 M1852,180 L1858,178.800 M1859,180.500 L1856,182.500" stroke="#777" stroke-width=".7"/><text transform="matrix(1,0.172,-0.04,1,1833.500,211.400)" font-family="Liberation Sans, sans-serif" font-size="13.500" font-weight="bold" fill="#9a9ea8" textLength="18.500" lengthAdjust="spacingAndGlyphs">LEFT</text><text transform="matrix(1,-0.56,0.03,1,1868.400,218.200)" font-family="Liberation Sans, sans-serif" font-size="13" font-weight="bold" fill="#9a9ea8" textLength="18.500" lengthAdjust="spacingAndGlyphs">FRONT</text><path d="M1819.500,226.400 L1863.7,241.6" stroke="#86e086" stroke-width="2.200"/><path d="M1892.200,222.500 L1863.7,241.6" stroke="#ea6868" stroke-width="2"/><path d="M1863.700,180.300 L1863.7,241.6" stroke="#4a4ae2" stroke-width="2.200"/><text x="1860" y="176.800" font-family="Liberation Sans, sans-serif" font-size="15.500" fill="#6e6ef6" stroke="#6e6ef6" stroke-width=".4" textLength="7.400" lengthAdjust="spacingAndGlyphs">Z</text><text x="1810.800" y="229.600" font-family="Liberation Sans, sans-serif" font-size="15" fill="#96ee96" stroke="#96ee96" stroke-width=".4" textLength="7.400" lengthAdjust="spacingAndGlyphs">Y</text><text x="1892" y="224.800" font-family="Liberation Sans, sans-serif" font-size="15" fill="#f27878" stroke="#f27878" stroke-width=".4" textLength="7.400" lengthAdjust="spacingAndGlyphs">X</text></svg>

</body></html>
